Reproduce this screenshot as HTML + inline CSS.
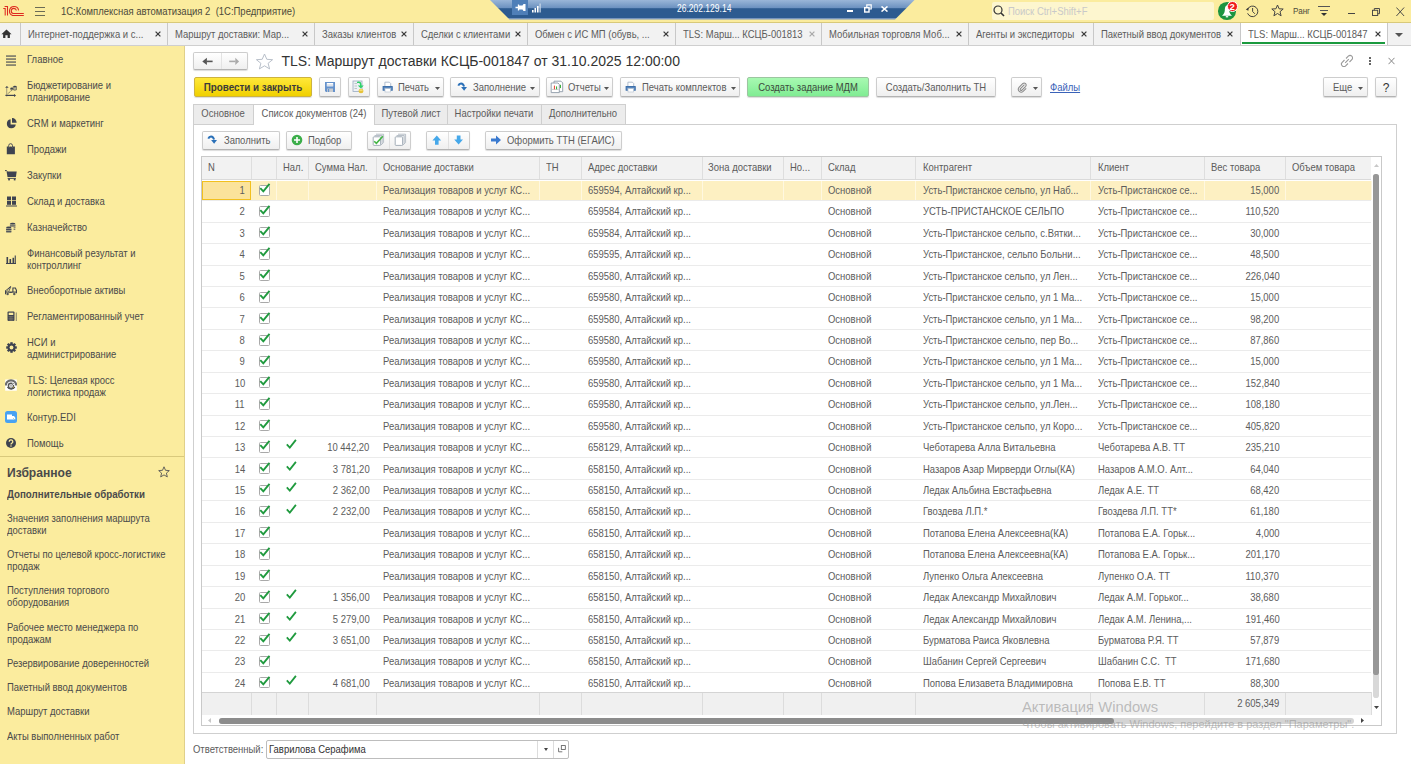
<!DOCTYPE html><html><head><meta charset="utf-8"><style>
*{box-sizing:border-box;margin:0;padding:0}
html,body{width:1411px;height:764px;overflow:hidden;background:#fff;font-family:"Liberation Sans",sans-serif;font-size:10.8px;color:#4d4d4d;position:relative}
.abs{position:absolute}
.tx{position:absolute;white-space:nowrap}
.btn{position:absolute;height:19px;border:1px solid #cdcdcd;border-bottom-color:#b3b3b3;border-radius:2px;background:linear-gradient(#fff,#efefef);box-shadow:0 1px 1px rgba(0,0,0,.14)}

</style></head><body>
<div class="abs" style="left:0;top:0;width:1411px;height:23px;background:#fbec9e"></div>
<svg class="abs" style="left:0;top:0" width="30" height="22" viewBox="0 0 30 22">
<g fill="none" stroke="#de2a20" stroke-width="1.05">
<path d="M3.3 8.5 H5.2 V15.6"/>
<path d="M4.6 6.5 H7.5 V15.6"/>
<path d="M18.6 10.3 A4.6 4.6 0 1 0 12.6 15.5 H23.8"/>
<path d="M16.4 10.5 A2.6 2.6 0 1 0 13.3 13.5 H23.8"/>
</g></svg>
<div class="abs" style="left:35px;top:7px;width:10px;height:1px;background:#6b6b55"></div>
<div class="abs" style="left:35px;top:11px;width:10px;height:1px;background:#6b6b55"></div>
<div class="abs" style="left:35px;top:15px;width:10px;height:1px;background:#6b6b55"></div>
<div class="tx" style="top:7px;font-size:10.2px;line-height:10.2px;color:#4d4a3a;left:61px;transform-origin:0 0;transform:scaleX(0.93);">1С:Комплексная автоматизация 2&nbsp; (1С:Предприятие)</div>
<svg class="abs" style="left:490px;top:0" width="425" height="20" viewBox="0 0 425 20">
<defs><linearGradient id="rg" x1="0" y1="0" x2="0" y2="1">
<stop offset="0" stop-color="#9ab6d8"/><stop offset="0.42" stop-color="#6a90bf"/><stop offset="0.44" stop-color="#2d5b90"/><stop offset="0.92" stop-color="#2d5b90"/><stop offset="0.93" stop-color="#7795bd"/><stop offset="1" stop-color="#7795bd"/></linearGradient></defs>
<path d="M0 0 H424.5 L405 19.5 H19.5 Z" fill="url(#rg)"/>
</svg>
<div class="abs" style="left:512px;top:0;width:16px;height:15px;background:#4f7fb8"></div>
<svg class="abs" style="left:515px;top:3px" width="11" height="9" viewBox="0 0 11 9"><path d="M0.5 4.5 H4 M3.5 1.5 V7.5" stroke="#fff" stroke-width="1.3"/><path d="M4 2.5 H7.5 L8.5 1 H10.5 V8 H8.5 L7.5 6.5 H4Z" fill="#fff"/></svg>
<svg class="abs" style="left:532px;top:3px" width="10" height="10" viewBox="0 0 10 10"><rect x="0" y="7" width="1.6" height="2.5" fill="#fff"/><rect x="2.5" y="5" width="1.6" height="4.5" fill="#fff"/><rect x="5" y="3" width="1.6" height="6.5" fill="#fff"/><rect x="7.5" y="0.5" width="1.2" height="9" fill="#cfdcec"/></svg>
<div class="tx" style="top:4px;font-size:10px;line-height:10px;color:#fff;left:677px;transform-origin:0 0;transform:scaleX(0.85);">26.202.129.14</div>
<div class="abs" style="left:847px;top:10px;width:6px;height:2px;background:#fff"></div>
<svg class="abs" style="left:864px;top:4px" width="8" height="9" viewBox="0 0 8 9"><rect x="0.7" y="3.7" width="4.3" height="4.3" fill="none" stroke="#fff" stroke-width="1.4"/><path d="M2.8 3.5 V0.8 H7.2 V5 H5" fill="none" stroke="#fff" stroke-width="1.2"/></svg>
<svg class="abs" style="left:881px;top:6px" width="7" height="6" viewBox="0 0 7 6"><path d="M0.5 0.5 L6.5 5.5 M6.5 0.5 L0.5 5.5" stroke="#fff" stroke-width="1.6"/></svg>
<div class="abs" style="left:992px;top:2px;width:222px;height:18px;background:#fdf6cf;border-radius:2px"></div>
<svg class="abs" style="left:993px;top:5px" width="12" height="12" viewBox="0 0 12 12"><circle cx="5" cy="5" r="4" fill="none" stroke="#333" stroke-width="1.2"/><path d="M8 8 L11 11" stroke="#333" stroke-width="1.6"/></svg>
<div class="tx" style="top:7px;font-size:10.2px;line-height:10.2px;color:#c9c9c9;left:1008px;transform-origin:0 0;transform:scaleX(0.93);">Поиск Ctrl+Shift+F</div>
<div class="abs" style="left:1218.3px;top:2.2px;width:17.7px;height:17.7px;border-radius:50%;background:#1b9440"></div>
<svg class="abs" style="left:1221px;top:4px" width="12" height="14" viewBox="0 0 12 14"><path d="M6 1.5 C4.2 1.5 4 4 3.8 6.5 C3.6 9 2.5 10.5 1 11.8 H11 C9.5 10.5 8.4 9 8.2 6.5 C8 4 7.8 1.5 6 1.5Z" fill="#fff"/><rect x="4.8" y="12" width="2.4" height="1.4" fill="#e8f0e8"/></svg>
<div class="abs" style="left:1226.6px;top:0.6px;width:11.2px;height:11.2px;border-radius:50%;background:#f01a1a;border:0.8px solid #fff"></div>
<div class="tx" style="top:2px;font-size:9.5px;line-height:9.5px;color:#fff;font-weight:bold;left:932.2px;width:600px;text-align:center;transform-origin:50% 0;">2</div>
<svg class="abs" style="left:1245px;top:4px" width="14" height="14" viewBox="0 0 14 14"><path d="M2.8 5 A5.3 5.3 0 1 1 2.6 9.3" fill="none" stroke="#3a3a3a" stroke-width="0.95"/><path d="M0.8 5.6 L3.6 3.6 L3.4 6.8Z" fill="#3a3a3a"/><path d="M7.6 4 V7.5 L9.9 9.8" fill="none" stroke="#3a3a3a" stroke-width="0.95"/></svg>
<svg class="abs" style="left:1271px;top:4px" width="13" height="13" viewBox="0 0 13 13"><path d="M6.5 1 L8.1 4.8 L12.2 5 L9 7.7 L10.1 11.8 L6.5 9.5 L2.9 11.8 L4 7.7 L0.8 5 L4.9 4.8Z" fill="none" stroke="#444" stroke-width="1"/></svg>
<div class="tx" style="top:7px;font-size:9px;line-height:9px;color:#4d4a3a;left:1293px;transform-origin:0 0;transform:scaleX(0.9);">Ранг</div>
<div class="abs" style="left:1318px;top:6px;width:12px;height:1.2px;background:#555"></div>
<div class="abs" style="left:1320px;top:10px;width:8px;height:1.2px;background:#555"></div>
<svg class="abs" style="left:1321px;top:13px" width="6" height="4" viewBox="0 0 6 4"><path d="M0 0H6L3 3Z" fill="#333"/></svg>
<div class="abs" style="left:1348px;top:13px;width:7px;height:1.2px;background:#444"></div>
<svg class="abs" style="left:1371.5px;top:7.5px" width="8" height="8" viewBox="0 0 8 8"><rect x="0.5" y="2.3" width="5.2" height="5.2" fill="none" stroke="#444" stroke-width="0.95"/><path d="M2.3 2.3V0.5H7.5V5.7H5.7" fill="none" stroke="#444" stroke-width="0.95"/></svg>
<svg class="abs" style="left:1396px;top:6.5px" width="8.5" height="9.5" viewBox="0 0 8.5 9.5"><path d="M0.4 0.5 L8.1 9 M8.1 0.5 L0.4 9" stroke="#444" stroke-width="0.95"/></svg>
<div class="abs" style="left:0;top:22px;width:1411px;height:1px;background:#d8c97a"></div>
<div class="abs" style="left:0;top:23px;width:1411px;height:22.5px;background:#f2f2f2;border-bottom:1px solid #cfcfcf"></div>
<svg class="abs" style="left:1px;top:28.5px" width="11" height="9.5" viewBox="0 0 13 11"><path d="M6.5 0.5 L12.5 6 H10.5 V10.5 H7.8 V7.3 H5.2 V10.5 H2.5 V6 H0.5Z" fill="#333"/></svg>
<div class="abs" style="left:20px;top:23px;width:1px;height:22px;background:#c8c8c8"></div>
<div class="tx" style="top:30px;font-size:10.2px;line-height:10.2px;color:#5c5c5c;left:28px;transform-origin:0 0;transform:scaleX(0.93);">Интернет-поддержка и с...</div>
<svg class="abs" style="left:155.2px;top:31px" width="6" height="6" viewBox="0 0 6 6"><path d="M0.6 0.6 L5.4 5.4 M5.4 0.6 L0.6 5.4" stroke="#3a3a3a" stroke-width="1.25"/></svg>
<div class="abs" style="left:167px;top:23px;width:1px;height:22px;background:#c8c8c8"></div>
<div class="tx" style="top:30px;font-size:10.2px;line-height:10.2px;color:#5c5c5c;left:175px;transform-origin:0 0;transform:scaleX(0.93);">Маршрут доставки: Мар...</div>
<svg class="abs" style="left:302.2px;top:31px" width="6" height="6" viewBox="0 0 6 6"><path d="M0.6 0.6 L5.4 5.4 M5.4 0.6 L0.6 5.4" stroke="#3a3a3a" stroke-width="1.25"/></svg>
<div class="abs" style="left:314px;top:23px;width:1px;height:22px;background:#c8c8c8"></div>
<div class="tx" style="top:30px;font-size:10.2px;line-height:10.2px;color:#5c5c5c;left:322px;transform-origin:0 0;transform:scaleX(0.93);">Заказы клиентов</div>
<svg class="abs" style="left:401.2px;top:31px" width="6" height="6" viewBox="0 0 6 6"><path d="M0.6 0.6 L5.4 5.4 M5.4 0.6 L0.6 5.4" stroke="#3a3a3a" stroke-width="1.25"/></svg>
<div class="abs" style="left:413px;top:23px;width:1px;height:22px;background:#c8c8c8"></div>
<div class="tx" style="top:30px;font-size:10.2px;line-height:10.2px;color:#5c5c5c;left:421px;transform-origin:0 0;transform:scaleX(0.93);">Сделки с клиентами</div>
<svg class="abs" style="left:515.2px;top:31px" width="6" height="6" viewBox="0 0 6 6"><path d="M0.6 0.6 L5.4 5.4 M5.4 0.6 L0.6 5.4" stroke="#3a3a3a" stroke-width="1.25"/></svg>
<div class="abs" style="left:527px;top:23px;width:1px;height:22px;background:#c8c8c8"></div>
<div class="tx" style="top:30px;font-size:10.2px;line-height:10.2px;color:#5c5c5c;left:535px;transform-origin:0 0;transform:scaleX(0.93);">Обмен с ИС МП (обувь, ...</div>
<svg class="abs" style="left:663.2px;top:31px" width="6" height="6" viewBox="0 0 6 6"><path d="M0.6 0.6 L5.4 5.4 M5.4 0.6 L0.6 5.4" stroke="#3a3a3a" stroke-width="1.25"/></svg>
<div class="abs" style="left:675px;top:23px;width:1px;height:22px;background:#c8c8c8"></div>
<div class="tx" style="top:30px;font-size:10.2px;line-height:10.2px;color:#5c5c5c;left:683px;transform-origin:0 0;transform:scaleX(0.93);">TLS: Марш... КСЦБ-001813</div>
<svg class="abs" style="left:809.2px;top:31px" width="6" height="6" viewBox="0 0 6 6"><path d="M0.6 0.6 L5.4 5.4 M5.4 0.6 L0.6 5.4" stroke="#aaa" stroke-width="1.25"/></svg>
<div class="abs" style="left:821px;top:23px;width:1px;height:22px;background:#c8c8c8"></div>
<div class="tx" style="top:30px;font-size:10.2px;line-height:10.2px;color:#5c5c5c;left:829px;transform-origin:0 0;transform:scaleX(0.93);">Мобильная торговля Моб...</div>
<svg class="abs" style="left:956.2px;top:31px" width="6" height="6" viewBox="0 0 6 6"><path d="M0.6 0.6 L5.4 5.4 M5.4 0.6 L0.6 5.4" stroke="#3a3a3a" stroke-width="1.25"/></svg>
<div class="abs" style="left:968px;top:23px;width:1px;height:22px;background:#c8c8c8"></div>
<div class="tx" style="top:30px;font-size:10.2px;line-height:10.2px;color:#5c5c5c;left:976px;transform-origin:0 0;transform:scaleX(0.93);">Агенты и экспедиторы</div>
<svg class="abs" style="left:1081.2px;top:31px" width="6" height="6" viewBox="0 0 6 6"><path d="M0.6 0.6 L5.4 5.4 M5.4 0.6 L0.6 5.4" stroke="#3a3a3a" stroke-width="1.25"/></svg>
<div class="abs" style="left:1093px;top:23px;width:1px;height:22px;background:#c8c8c8"></div>
<div class="tx" style="top:30px;font-size:10.2px;line-height:10.2px;color:#5c5c5c;left:1101px;transform-origin:0 0;transform:scaleX(0.93);">Пакетный ввод документов</div>
<svg class="abs" style="left:1227.2px;top:31px" width="6" height="6" viewBox="0 0 6 6"><path d="M0.6 0.6 L5.4 5.4 M5.4 0.6 L0.6 5.4" stroke="#3a3a3a" stroke-width="1.25"/></svg>
<div class="abs" style="left:1240px;top:23px;width:147px;height:22px;background:#fff"></div>
<div class="abs" style="left:1240px;top:23px;width:1px;height:22px;background:#c8c8c8"></div>
<div class="tx" style="top:30px;font-size:10.2px;line-height:10.2px;color:#5c5c5c;left:1248px;transform-origin:0 0;transform:scaleX(0.93);">TLS: Марш... КСЦБ-001847</div>
<svg class="abs" style="left:1375.2px;top:31px" width="6" height="6" viewBox="0 0 6 6"><path d="M0.6 0.6 L5.4 5.4 M5.4 0.6 L0.6 5.4" stroke="#3a3a3a" stroke-width="1.25"/></svg>
<div class="abs" style="left:1242px;top:42px;width:143px;height:1.5px;background:#1b9a3e"></div>
<div class="abs" style="left:1387px;top:23px;width:1px;height:22px;background:#c8c8c8"></div>
<svg class="abs" style="left:1395px;top:32.5px" width="8" height="4" viewBox="0 0 8 4"><path d="M0 0H8L4 4Z" fill="#555"/></svg>
<div class="abs" style="left:0;top:46px;width:185px;height:718px;background:#fbec9e;border-right:1px solid #e0d08a"></div>
<div class="tx" style="top:55px;font-size:10.2px;line-height:10.2px;color:#4a4a4a;left:27px;transform-origin:0 0;transform:scaleX(0.93);">Главное</div>
<div class="tx" style="top:81px;font-size:10.2px;line-height:10.2px;color:#4a4a4a;left:27px;transform-origin:0 0;transform:scaleX(0.93);">Бюджетирование и</div>
<div class="tx" style="top:93px;font-size:10.2px;line-height:10.2px;color:#4a4a4a;left:27px;transform-origin:0 0;transform:scaleX(0.93);">планирование</div>
<div class="tx" style="top:119px;font-size:10.2px;line-height:10.2px;color:#4a4a4a;left:27px;transform-origin:0 0;transform:scaleX(0.93);">CRM и маркетинг</div>
<div class="tx" style="top:145px;font-size:10.2px;line-height:10.2px;color:#4a4a4a;left:27px;transform-origin:0 0;transform:scaleX(0.93);">Продажи</div>
<div class="tx" style="top:171px;font-size:10.2px;line-height:10.2px;color:#4a4a4a;left:27px;transform-origin:0 0;transform:scaleX(0.93);">Закупки</div>
<div class="tx" style="top:197px;font-size:10.2px;line-height:10.2px;color:#4a4a4a;left:27px;transform-origin:0 0;transform:scaleX(0.93);">Склад и доставка</div>
<div class="tx" style="top:223px;font-size:10.2px;line-height:10.2px;color:#4a4a4a;left:27px;transform-origin:0 0;transform:scaleX(0.93);">Казначейство</div>
<div class="tx" style="top:249px;font-size:10.2px;line-height:10.2px;color:#4a4a4a;left:27px;transform-origin:0 0;transform:scaleX(0.93);">Финансовый результат и</div>
<div class="tx" style="top:261px;font-size:10.2px;line-height:10.2px;color:#4a4a4a;left:27px;transform-origin:0 0;transform:scaleX(0.93);">контроллинг</div>
<div class="tx" style="top:286px;font-size:10.2px;line-height:10.2px;color:#4a4a4a;left:27px;transform-origin:0 0;transform:scaleX(0.93);">Внеоборотные активы</div>
<div class="tx" style="top:312px;font-size:10.2px;line-height:10.2px;color:#4a4a4a;left:27px;transform-origin:0 0;transform:scaleX(0.93);">Регламентированный учет</div>
<div class="tx" style="top:338px;font-size:10.2px;line-height:10.2px;color:#4a4a4a;left:27px;transform-origin:0 0;transform:scaleX(0.93);">НСИ и</div>
<div class="tx" style="top:350px;font-size:10.2px;line-height:10.2px;color:#4a4a4a;left:27px;transform-origin:0 0;transform:scaleX(0.93);">администрирование</div>
<div class="tx" style="top:376px;font-size:10.2px;line-height:10.2px;color:#4a4a4a;left:27px;transform-origin:0 0;transform:scaleX(0.93);">TLS: Целевая кросс</div>
<div class="tx" style="top:388px;font-size:10.2px;line-height:10.2px;color:#4a4a4a;left:27px;transform-origin:0 0;transform:scaleX(0.93);">логистика продаж</div>
<div class="tx" style="top:413px;font-size:10.2px;line-height:10.2px;color:#4a4a4a;left:27px;transform-origin:0 0;transform:scaleX(0.93);">Контур.EDI</div>
<div class="tx" style="top:439px;font-size:10.2px;line-height:10.2px;color:#4a4a4a;left:27px;transform-origin:0 0;transform:scaleX(0.93);">Помощь</div>
<div class="abs" style="left:0;top:456px;width:184px;height:1px;background:#d9c97c"></div>
<div class="tx" style="top:466px;font-size:13px;line-height:13px;color:#4a4a4a;font-weight:bold;left:7px;transform-origin:0 0;transform:scaleX(0.93);">Избранное</div>
<svg class="abs" style="left:158px;top:466px" width="12" height="12" viewBox="0 0 12 12"><path d="M6 0.8 L7.5 4.3 L11.3 4.6 L8.4 7.1 L9.3 10.9 L6 8.9 L2.7 10.9 L3.6 7.1 L0.7 4.6 L4.5 4.3Z" fill="none" stroke="#555" stroke-width="0.9"/></svg>
<div class="tx" style="top:490px;font-size:10.2px;line-height:10.2px;color:#4a4a4a;font-weight:bold;left:7px;transform-origin:0 0;transform:scaleX(0.955);">Дополнительные обработки</div>
<div class="tx" style="top:514px;font-size:10.2px;line-height:10.2px;color:#4a4a4a;left:7px;transform-origin:0 0;transform:scaleX(0.93);">Значения заполнения маршрута</div>
<div class="tx" style="top:526px;font-size:10.2px;line-height:10.2px;color:#4a4a4a;left:7px;transform-origin:0 0;transform:scaleX(0.93);">доставки</div>
<div class="tx" style="top:550px;font-size:10.2px;line-height:10.2px;color:#4a4a4a;left:7px;transform-origin:0 0;transform:scaleX(0.93);">Отчеты по целевой кросс-логистике</div>
<div class="tx" style="top:562px;font-size:10.2px;line-height:10.2px;color:#4a4a4a;left:7px;transform-origin:0 0;transform:scaleX(0.93);">продаж</div>
<div class="tx" style="top:586px;font-size:10.2px;line-height:10.2px;color:#4a4a4a;left:7px;transform-origin:0 0;transform:scaleX(0.93);">Поступления торгового</div>
<div class="tx" style="top:598px;font-size:10.2px;line-height:10.2px;color:#4a4a4a;left:7px;transform-origin:0 0;transform:scaleX(0.93);">оборудования</div>
<div class="tx" style="top:623px;font-size:10.2px;line-height:10.2px;color:#4a4a4a;left:7px;transform-origin:0 0;transform:scaleX(0.93);">Рабочее место менеджера по</div>
<div class="tx" style="top:635px;font-size:10.2px;line-height:10.2px;color:#4a4a4a;left:7px;transform-origin:0 0;transform:scaleX(0.93);">продажам</div>
<div class="tx" style="top:659px;font-size:10.2px;line-height:10.2px;color:#4a4a4a;left:7px;transform-origin:0 0;transform:scaleX(0.93);">Резервирование доверенностей</div>
<div class="tx" style="top:683px;font-size:10.2px;line-height:10.2px;color:#4a4a4a;left:7px;transform-origin:0 0;transform:scaleX(0.93);">Пакетный ввод документов</div>
<div class="tx" style="top:707px;font-size:10.2px;line-height:10.2px;color:#4a4a4a;left:7px;transform-origin:0 0;transform:scaleX(0.93);">Маршрут доставки</div>
<div class="tx" style="top:732px;font-size:10.2px;line-height:10.2px;color:#4a4a4a;left:7px;transform-origin:0 0;transform:scaleX(0.93);">Акты выполненных работ</div>
<svg class="abs" style="left:6px;top:54.5px" width="10" height="11" viewBox="0 0 10 11"><rect x="0" y="0.5" width="10" height="1.1" fill="#3e4350"/><rect x="0" y="3.5" width="10" height="1.1" fill="#3e4350"/><rect x="0" y="6.5" width="10" height="1.1" fill="#3e4350"/><rect x="0" y="9.5" width="10" height="1.1" fill="#3e4350"/></svg>
<svg class="abs" style="left:5px;top:85px" width="12" height="13" viewBox="0 0 12 13"><path d="M1.65 2.2 V11.6" stroke="#b5ad80" stroke-width="1.3"/><path d="M0.1 2.8 L1.9 0.9 L3.7 2.8Z" fill="#3e4350"/><path d="M0.4 10.4 H9.6" stroke="#3e4350" stroke-width="1.2"/><path d="M9 8.9 L11.1 10.4 L9 11.9Z" fill="#3e4350"/><path d="M2.7 8.8 L7.2 5" stroke="#5d5c48" stroke-width="0.9" stroke-dasharray="1.3 0.7"/><rect x="5.3" y="3.4" width="2.8" height="1.8" fill="#8c8a70"/><ellipse cx="6.7" cy="3.4" rx="1.4" ry="0.8" fill="#3e4350"/><path d="M8.1 1.7 V4.6 Q9.9 5.9 11.7 4.6 V1.7" fill="#b8b38c" stroke="#55544a" stroke-width="0.7"/><ellipse cx="9.9" cy="1.6" rx="1.8" ry="0.8" fill="#3e4350"/></svg>
<svg class="abs" style="left:6px;top:118px" width="11" height="11" viewBox="0 0 11 11"><path d="M4.6 1.2 A4.5 4.5 0 1 0 9.8 6.4 H4.6Z" fill="#3e4350"/><path d="M6 0 A4.5 4.5 0 0 1 10.6 4.8 H6Z" fill="#3e4350"/></svg>
<svg class="abs" style="left:6px;top:142.5px" width="10" height="12" viewBox="0 0 10 12"><path d="M2.7 4.2 V2.6 A1.9 1.9 0 0 1 6.5 2.6 V4.2" fill="none" stroke="#3e4350" stroke-width="0.9"/><path d="M0.8 3.6 H2.3 L3 4.6 L3.7 3.6 H5.5 L6.2 4.6 L6.9 3.6 H8.9 V11.2 H0.8Z" fill="#3e4350"/></svg>
<svg class="abs" style="left:5px;top:169.5px" width="12" height="11" viewBox="0 0 12 11"><path d="M0 0.6 H1.6 L2.3 1.6" fill="none" stroke="#3e4350" stroke-width="1"/><path d="M1.6 1.5 H11.7 L10.9 7.1 H2.5Z" fill="#3e4350"/><rect x="2.6" y="7.9" width="8.3" height="0.9" fill="#3e4350"/><rect x="3.2" y="8.5" width="1.7" height="1.9" fill="#3e4350"/><rect x="8.8" y="8.5" width="1.7" height="1.9" fill="#3e4350"/></svg>
<svg class="abs" style="left:5.5px;top:195.5px" width="11" height="11" viewBox="0 0 11 11"><rect x="1" y="0.5" width="4" height="3.8" fill="#3e4350"/><rect x="6" y="0.5" width="4" height="3.8" fill="#3e4350"/><rect x="1" y="5" width="4" height="3.8" fill="#3e4350"/><rect x="6" y="5" width="4" height="3.8" fill="#3e4350"/><rect x="0" y="9.5" width="11" height="1" fill="#3e4350"/></svg>
<svg class="abs" style="left:6px;top:221.5px" width="11" height="11" viewBox="0 0 11 11"><rect x="3.9" y="1.6" width="5.5" height="3" fill="#a29f80"/><ellipse cx="6.65" cy="1.5" rx="2.6" ry="0.75" fill="#3e4350"/><rect x="3.9" y="2.9" width="5.5" height="0.7" fill="#3e4350" opacity=".6"/><rect x="3.9" y="4.1" width="5.5" height="0.6" fill="#3e4350" opacity=".6"/><rect x="7.6" y="5.2" width="1.9" height="0.8" fill="#3e4350" opacity=".7"/><rect x="7.6" y="6.6" width="1.7" height="1.2" fill="#3e4350" opacity=".8"/><rect x="0.1" y="5.4" width="5.3" height="5" rx="0.6" fill="#a29f80"/><ellipse cx="2.75" cy="5.4" rx="2.65" ry="0.8" fill="#3e4350"/><rect x="0.1" y="7.1" width="5.3" height="0.9" fill="#3e4350"/><rect x="0.1" y="9.2" width="5.3" height="1.1" rx="0.4" fill="#3e4350"/></svg>
<svg class="abs" style="left:6px;top:254.5px" width="10" height="9" viewBox="0 0 10 9"><rect x="0.5" y="2" width="1.6" height="6" fill="#3e4350"/><rect x="3.5" y="4" width="1.6" height="4" fill="#3e4350"/><rect x="6.5" y="2.8" width="1.6" height="5.2" fill="#3e4350"/><rect x="8.7" y="0.5" width="1.1" height="7.5" fill="#3e4350"/><rect x="0" y="8" width="10" height="1" fill="#3e4350"/></svg>
<svg class="abs" style="left:5px;top:285.5px" width="12" height="10" viewBox="0 0 12 10"><path d="M0.6 5.2 L5.9 0.4" stroke="#3e4350" stroke-width="1.4" stroke-dasharray="1.1 0.5"/><path d="M0.5 4.5 V8.3" stroke="#3e4350" stroke-width="1"/><path d="M5.6 1.2 L3.6 5.8" stroke="#3e4350" stroke-width="0.8"/><path d="M7.9 6 V2 H10.4 L11.5 4.5 V7.2" fill="none" stroke="#3e4350" stroke-width="1.1"/><path d="M0.8 6.1 H11.5" stroke="#3e4350" stroke-width="1.1"/><path d="M4 6 Q5.8 7.8 7.6 6Z" fill="#3e4350"/><circle cx="2.6" cy="8" r="1.35" fill="#7d7b66"/><circle cx="2.6" cy="8" r="0.7" fill="#3e4350"/><circle cx="9.3" cy="8" r="1.35" fill="#7d7b66"/><circle cx="9.3" cy="8" r="0.7" fill="#3e4350"/></svg>
<svg class="abs" style="left:6.5px;top:311px" width="10" height="10" viewBox="0 0 10 10"><rect x="0.5" y="0.5" width="7" height="9.5" rx="1" fill="#3e4350"/><rect x="1.7" y="1.7" width="4.6" height="2.3" fill="#fbec9e"/><path d="M1.5 5.6 H6.5 M1.5 7.3 H6.5 M1.5 9 H6.5 M3.2 5 V10 M4.9 5 V10" stroke="#8c8770" stroke-width="0.5"/><rect x="8.8" y="1.5" width="0.9" height="8.5" fill="#7a7866"/></svg>
<svg class="abs" style="left:5.5px;top:342px" width="11" height="11" viewBox="0 0 11 11"><g transform="translate(5.5 5.5)"><circle r="3.9" fill="#3e4350"/><rect x="-1.2" y="-5.3" width="2.4" height="2.6" fill="#3e4350" transform="rotate(0)"/><rect x="-1.2" y="-5.3" width="2.4" height="2.6" fill="#3e4350" transform="rotate(45)"/><rect x="-1.2" y="-5.3" width="2.4" height="2.6" fill="#3e4350" transform="rotate(90)"/><rect x="-1.2" y="-5.3" width="2.4" height="2.6" fill="#3e4350" transform="rotate(135)"/><rect x="-1.2" y="-5.3" width="2.4" height="2.6" fill="#3e4350" transform="rotate(180)"/><rect x="-1.2" y="-5.3" width="2.4" height="2.6" fill="#3e4350" transform="rotate(225)"/><rect x="-1.2" y="-5.3" width="2.4" height="2.6" fill="#3e4350" transform="rotate(270)"/><rect x="-1.2" y="-5.3" width="2.4" height="2.6" fill="#3e4350" transform="rotate(315)"/><circle r="1.9" fill="#fbec9e"/></g></svg>
<svg class="abs" style="left:5px;top:379px" width="12" height="12" viewBox="0 0 12 12"><rect x="0.2" y="0.5" width="11.6" height="11.2" fill="#fff"/><path d="M0.8 6.5 A5.2 5.2 0 0 1 11.2 6.5" fill="none" stroke="#6e6e6e" stroke-width="2.2"/><path d="M2.5 8.2 A4.5 4.5 0 0 0 9.8 8.2" fill="none" stroke="#444" stroke-width="1.3"/><circle cx="6" cy="6.8" r="2.6" fill="none" stroke="#555" stroke-width="1.4"/><path d="M6 5 V8.6 M4.6 6.8 H7.4" stroke="#888" stroke-width="0.6"/><path d="M7.5 4.5 L9.5 6.5" stroke="#fff" stroke-width="0.9"/><circle cx="8.4" cy="8.2" r="0.6" fill="#b9a040"/></svg>
<svg class="abs" style="left:5px;top:411px" width="12" height="12" viewBox="0 0 12 12"><rect width="12" height="12" rx="2.5" fill="#48a2f2"/><path d="M2 3.5 H7 V8.5 H2Z M7 5 H9 L10.3 6.8 V8.5 H7Z" fill="#fff"/><path d="M8 7 L10 9" stroke="#7bb" stroke-width="0.6"/></svg>
<svg class="abs" style="left:6px;top:437.5px" width="10" height="10" viewBox="0 0 10 10"><circle cx="5" cy="5" r="5" fill="#3e4350"/><path d="M3.2 3.8 A1.8 1.8 0 1 1 5.6 5.4 Q5 5.8 5 6.6" fill="none" stroke="#fbec9e" stroke-width="1.3"/><circle cx="5" cy="8.1" r="0.75" fill="#fbec9e"/></svg>
<div class="btn" style="left:193px;top:52px;width:55px;height:18px"></div>
<div class="abs" style="left:221px;top:53px;width:1px;height:16px;background:#e3e3e3"></div>
<svg class="abs" style="left:200px;top:56px" width="14" height="11" viewBox="0 0 14 11"><path d="M2.3 5.4 L6.9 1.8 V9.1Z" fill="#555"/><rect x="6.5" y="4.6" width="6.1" height="1.6" fill="#555"/></svg>
<svg class="abs" style="left:227px;top:56px" width="14" height="11" viewBox="0 0 14 11"><path d="M12.1 5.4 L8.3 1.8 V9.1Z" fill="#aaa"/><rect x="2.2" y="4.6" width="6.3" height="1.6" fill="#aaa"/></svg>
<svg class="abs" style="left:255px;top:53px" width="19" height="17" viewBox="0 0 19 17"><path d="M9.5 1 L11.8 6.3 L17.6 6.7 L13.1 10.3 L14.6 15.9 L9.5 12.8 L4.4 15.9 L5.9 10.3 L1.4 6.7 L7.2 6.3Z" fill="none" stroke="#b4bcc6" stroke-width="0.95"/></svg>
<div class="tx" style="top:54px;font-size:14px;line-height:14px;color:#333;left:281.5px;transform-origin:0 0;">TLS: Маршрут доставки КСЦБ-001847 от 31.10.2025 12:00:00</div>
<svg class="abs" style="left:1340px;top:54px" width="14" height="14" viewBox="0 0 14 14"><g fill="none" stroke="#9a9a9a" stroke-width="1.1"><path d="M6 4.5 L8.3 2.2 A2 2 0 0 1 11.8 5.7 L9.5 8"/><path d="M8 9.5 L5.7 11.8 A2 2 0 0 1 2.2 8.3 L4.5 6"/><path d="M5.2 8.8 L8.8 5.2"/></g></svg>
<div class="abs" style="left:1368.5px;top:57px;width:2px;height:2px;background:#666"></div>
<div class="abs" style="left:1368.5px;top:60px;width:2px;height:2px;background:#666"></div>
<div class="abs" style="left:1368.5px;top:63px;width:2px;height:2px;background:#666"></div>
<svg class="abs" style="left:1388px;top:57px" width="7" height="8" viewBox="0 0 7 8"><path d="M0.5 0.8 L6.5 7.2 M6.5 0.8 L0.5 7.2" stroke="#888" stroke-width="1"/></svg>
<div class="btn" style="left:194px;top:77.3px;height:19.4px;width:118px;background:linear-gradient(#ffe83a,#f0d000);border-color:#cdb33f"></div>
<div class="tx" style="top:83px;font-size:10.2px;line-height:10.2px;color:#3b3b3b;font-weight:bold;left:-47px;width:600px;text-align:center;transform-origin:50% 0;transform:scaleX(0.965);">Провести и закрыть</div>
<div class="btn" style="left:319px;top:77.3px;height:19.4px;width:22px"></div>
<svg class="abs" style="left:325px;top:82px" width="10" height="10" viewBox="0 0 10 10"><path d="M0 0 H10 V10 H1 L0 9Z" fill="#6592cc"/><rect x="1.8" y="1" width="6.4" height="3.4" fill="#fff"/><rect x="1.8" y="2.6" width="6.4" height="0.9" fill="#b9c6d6"/><rect x="2.2" y="6.5" width="5.8" height="3.5" fill="#c9ccd0"/><rect x="3" y="7" width="1.2" height="3" fill="#6592cc"/></svg>
<div class="btn" style="left:348px;top:77.3px;height:19.4px;width:22px"></div>
<svg class="abs" style="left:352px;top:80px" width="14" height="14" viewBox="0 0 14 14"><rect x="1" y="1" width="9" height="10.5" fill="#eef1f5" stroke="#9aaac0" stroke-width="0.8"/><path d="M2.5 3.5H5M2.5 6H5M2.5 8.5H5" stroke="#9aa" stroke-width="0.6"/><path d="M5 2 C7.5 1 9.5 2 9.5 4.5 V5.5 H11.8 L8.8 8.6 L5.8 5.5 H8 V4.5 C8 3.3 6.5 2.8 5 3.2Z" fill="#2ed16a"/><ellipse cx="9" cy="11" rx="2.5" ry="2.3" fill="#e6c23a"/><ellipse cx="9" cy="10.2" rx="1.8" ry="0.9" fill="#f5dc70"/></svg>
<div class="btn" style="left:377px;top:77.3px;height:19.4px;width:67px"></div>
<svg class="abs" style="left:382px;top:81px" width="12" height="12" viewBox="0 0 12 12"><path d="M2.9 5.2 V1.2 H7.4 L8.7 2.5 V5.2" fill="#fff" stroke="#9fb0c4" stroke-width="0.8"/><rect x="0.6" y="5" width="10.2" height="4.8" rx="0.6" fill="#3f70aa"/><rect x="1.6" y="6.2" width="8.2" height="2.6" fill="#5f8cc2"/><rect x="3" y="7.6" width="5.5" height="3.4" fill="#fff" stroke="#b7c3d0" stroke-width="0.7"/></svg>
<div class="tx" style="top:83px;font-size:10.2px;line-height:10.2px;color:#5c5c5c;left:398px;transform-origin:0 0;transform:scaleX(0.93);">Печать</div>
<svg class="abs" style="left:434.5px;top:86.5px" width="5" height="3" viewBox="0 0 5 3"><path d="M0 0H5L2.5 3Z" fill="#555"/></svg>
<div class="btn" style="left:450px;top:77.3px;height:19.4px;width:89.5px"></div>
<svg class="abs" style="left:457px;top:81px" width="12" height="12" viewBox="0 0 12 12"><path d="M1.3 4.6 C2.3 1.9 5.9 1.2 7.1 5.6" fill="none" stroke="#2a70b8" stroke-width="1.9"/><path d="M4.1 6 H10 L7.1 9.8Z" fill="#2a70b8"/></svg>
<div class="tx" style="top:83px;font-size:10.2px;line-height:10.2px;color:#5c5c5c;left:473px;transform-origin:0 0;transform:scaleX(0.93);">Заполнение</div>
<svg class="abs" style="left:530.0px;top:86.5px" width="5" height="3" viewBox="0 0 5 3"><path d="M0 0H5L2.5 3Z" fill="#555"/></svg>
<div class="btn" style="left:546px;top:77.3px;height:19.4px;width:67px"></div>
<svg class="abs" style="left:550px;top:80px" width="14" height="14" viewBox="0 0 14 14"><path d="M4 1.2 H11 L12.7 2.9 V11.7 H4Z" fill="#fff" stroke="#8d9aa8" stroke-width="0.9"/><path d="M1.2 3 H8 L9.3 4.3 V12.6 H1.2Z" fill="#fff" stroke="#8d9aa8" stroke-width="0.9"/><path d="M2 9.4 H8.5" stroke="#aaa" stroke-width="0.6"/><rect x="3.9" y="5.6" width="1.1" height="3.7" fill="#e8503c"/><rect x="6" y="6.4" width="1.1" height="2.9" fill="#3fae3f"/><rect x="9.9" y="4.8" width="1.1" height="3.3" fill="#3fae3f"/></svg>
<div class="tx" style="top:83px;font-size:10.2px;line-height:10.2px;color:#5c5c5c;left:568px;transform-origin:0 0;transform:scaleX(0.93);">Отчеты</div>
<svg class="abs" style="left:603.5px;top:86.5px" width="5" height="3" viewBox="0 0 5 3"><path d="M0 0H5L2.5 3Z" fill="#555"/></svg>
<div class="btn" style="left:620px;top:77.3px;height:19.4px;width:120px"></div>
<svg class="abs" style="left:625px;top:81px" width="12" height="12" viewBox="0 0 12 12"><path d="M2.9 5.2 V1.2 H7.4 L8.7 2.5 V5.2" fill="#fff" stroke="#9fb0c4" stroke-width="0.8"/><rect x="0.6" y="5" width="10.2" height="4.8" rx="0.6" fill="#3f70aa"/><rect x="1.6" y="6.2" width="8.2" height="2.6" fill="#5f8cc2"/><rect x="3" y="7.6" width="5.5" height="3.4" fill="#fff" stroke="#b7c3d0" stroke-width="0.7"/></svg>
<div class="tx" style="top:83px;font-size:10.2px;line-height:10.2px;color:#5c5c5c;left:642px;transform-origin:0 0;transform:scaleX(0.93);">Печать комплектов</div>
<svg class="abs" style="left:730.5px;top:86.5px" width="5" height="3" viewBox="0 0 5 3"><path d="M0 0H5L2.5 3Z" fill="#555"/></svg>
<div class="btn" style="left:747px;top:77.3px;height:19.4px;width:122px;background:linear-gradient(#a8f9b2,#80ec93);border-color:#9cc6a0"></div>
<div class="tx" style="top:83px;font-size:10.2px;line-height:10.2px;color:#3d4a3d;left:508px;width:600px;text-align:center;transform-origin:50% 0;transform:scaleX(0.93);">Создать задание МДМ</div>
<div class="btn" style="left:876px;top:77.3px;height:19.4px;width:120px"></div>
<div class="tx" style="top:83px;font-size:10.2px;line-height:10.2px;color:#5c5c5c;left:636px;width:600px;text-align:center;transform-origin:50% 0;transform:scaleX(0.93);">Создать/Заполнить ТН</div>
<div class="btn" style="left:1011px;top:77.3px;height:19.4px;width:31px"></div>
<svg class="abs" style="left:1016.5px;top:82px" width="10.5" height="10.5" viewBox="0 0 12 12"><path d="M8.5 3 L4 7.5 A1.2 1.2 0 0 0 5.7 9.2 L10 4.9 A2.3 2.3 0 0 0 6.8 1.7 L2.3 6.2 A3.3 3.3 0 0 0 7 10.8 L10.5 7.3" fill="none" stroke="#8a8a8a" stroke-width="1.2"/></svg>
<svg class="abs" style="left:1032.5px;top:86.5px" width="5" height="3" viewBox="0 0 5 3"><path d="M0 0H5L2.5 3Z" fill="#555"/></svg>
<div class="tx" style="top:83px;font-size:10.2px;line-height:10.2px;color:#3a62b8;left:1050px;transform-origin:0 0;transform:scaleX(0.93);text-decoration:underline;">Файлы</div>
<div class="btn" style="left:1323px;top:77.3px;height:19.4px;width:45px"></div>
<div class="tx" style="top:83px;font-size:10.2px;line-height:10.2px;color:#5c5c5c;left:1333px;transform-origin:0 0;transform:scaleX(0.93);">Еще</div>
<svg class="abs" style="left:1357.5px;top:86.5px" width="5" height="3" viewBox="0 0 5 3"><path d="M0 0H5L2.5 3Z" fill="#555"/></svg>
<div class="btn" style="left:1375px;top:77.3px;height:19.4px;width:22px"></div>
<div class="tx" style="top:82px;font-size:12px;line-height:12px;color:#333;left:1086px;width:600px;text-align:center;transform-origin:50% 0;">?</div>
<div class="abs" style="left:193px;top:124px;width:1204px;height:610px;border:1px solid #cfcfcf;background:#fff"></div>
<div class="abs" style="left:193px;top:104px;width:61px;height:20px;background:#ececec;border:1px solid #cfcfcf;border-bottom:none"></div>
<div class="tx" style="top:109px;font-size:10.2px;line-height:10.2px;color:#5c5c5c;left:-77.0px;width:600px;text-align:center;transform-origin:50% 0;transform:scaleX(0.93);">Основное</div>
<div class="abs" style="left:253px;top:104px;width:122px;height:21px;background:#fff;border:1px solid #cfcfcf;border-bottom:none"></div>
<div class="tx" style="top:109px;font-size:10.2px;line-height:10.2px;color:#5c5c5c;left:13.5px;width:600px;text-align:center;transform-origin:50% 0;transform:scaleX(0.93);">Список документов (24)</div>
<div class="abs" style="left:374px;top:104px;width:74px;height:20px;background:#ececec;border:1px solid #cfcfcf;border-bottom:none"></div>
<div class="tx" style="top:109px;font-size:10.2px;line-height:10.2px;color:#5c5c5c;left:110.5px;width:600px;text-align:center;transform-origin:50% 0;transform:scaleX(0.93);">Путевой лист</div>
<div class="abs" style="left:447px;top:104px;width:95px;height:20px;background:#ececec;border:1px solid #cfcfcf;border-bottom:none"></div>
<div class="tx" style="top:109px;font-size:10.2px;line-height:10.2px;color:#5c5c5c;left:194.0px;width:600px;text-align:center;transform-origin:50% 0;transform:scaleX(0.93);">Настройки печати</div>
<div class="abs" style="left:541px;top:104px;width:85px;height:20px;background:#ececec;border:1px solid #cfcfcf;border-bottom:none"></div>
<div class="tx" style="top:109px;font-size:10.2px;line-height:10.2px;color:#5c5c5c;left:283.0px;width:600px;text-align:center;transform-origin:50% 0;transform:scaleX(0.93);">Дополнительно</div>
<div class="btn" style="left:202px;top:131px;width:78px"></div>
<svg class="abs" style="left:207px;top:134px" width="12" height="12" viewBox="0 0 12 12"><path d="M1.3 4.6 C2.3 1.9 5.9 1.2 7.1 5.6" fill="none" stroke="#2a70b8" stroke-width="1.9"/><path d="M4.1 6 H10 L7.1 9.8Z" fill="#2a70b8"/></svg>
<div class="tx" style="top:136px;font-size:10.2px;line-height:10.2px;color:#5c5c5c;left:224px;transform-origin:0 0;transform:scaleX(0.93);">Заполнить</div>
<div class="btn" style="left:286px;top:131px;width:66px"></div>
<svg class="abs" style="left:291px;top:134px" width="12" height="12" viewBox="0 0 12 12"><circle cx="6" cy="6" r="5.3" fill="#3cae4a"/><path d="M6 3V9M3 6H9" stroke="#fff" stroke-width="1.6"/></svg>
<div class="tx" style="top:136px;font-size:10.2px;line-height:10.2px;color:#5c5c5c;left:308px;transform-origin:0 0;transform:scaleX(0.93);">Подбор</div>
<div class="btn" style="left:367px;top:131px;width:44px"></div>
<div class="abs" style="left:389px;top:132px;width:1px;height:17px;background:#e0e0e0"></div>
<svg class="abs" style="left:372px;top:133px" width="13" height="14" viewBox="0 0 13 14"><path d="M4 1.2 H11.6 V9.5 L10 11" fill="#f4f6f8" stroke="#a9b3bd" stroke-width="0.8"/><path d="M2.6 2.5 H10.2 V10.8 L8.6 12.4" fill="#eef1f4" stroke="#a9b3bd" stroke-width="0.8"/><rect x="1.2" y="3.8" width="7.4" height="8.6" rx="0.8" fill="#fff" stroke="#9aa5b0" stroke-width="0.9"/><path d="M2.2 8.2 L4.4 10.4 L10.8 3.2" fill="none" stroke="#45b545" stroke-width="1.6"/></svg>
<svg class="abs" style="left:393.5px;top:133px" width="13" height="14" viewBox="0 0 13 14"><path d="M4 1.2 H11.6 V9.5 L10 11" fill="#f4f6f8" stroke="#a9b3bd" stroke-width="0.8"/><path d="M2.6 2.5 H10.2 V10.8 L8.6 12.4" fill="#eef1f4" stroke="#a9b3bd" stroke-width="0.8"/><rect x="1.2" y="3.8" width="7.4" height="8.6" rx="0.8" fill="#fff" stroke="#9aa5b0" stroke-width="0.9"/></svg>
<div class="btn" style="left:426px;top:131px;width:44px"></div>
<div class="abs" style="left:448px;top:132px;width:1px;height:17px;background:#e0e0e0"></div>
<svg class="abs" style="left:432px;top:135px" width="10" height="10" viewBox="0 0 10 10"><path d="M4.8 0.6 L9.2 5.6 H6.6 V9.8 H3 V5.6 H0.4Z" fill="#45a8ea"/></svg>
<svg class="abs" style="left:453.5px;top:135px" width="10" height="10" viewBox="0 0 10 10"><path d="M4.6 9.6 L9 4.6 H6.5 V0.6 H2.8 V4.6 H0.2Z" fill="#45a8ea"/></svg>
<div class="btn" style="left:485px;top:131px;width:137px"></div>
<svg class="abs" style="left:490px;top:134px" width="12" height="12" viewBox="0 0 12 12"><path d="M1 4.5 H6 V1.5 L11 6 L6 10.5 V7.5 H1Z" fill="#3a7ad0"/></svg>
<div class="tx" style="top:136px;font-size:10.2px;line-height:10.2px;color:#5c5c5c;left:507px;transform-origin:0 0;transform:scaleX(0.93);">Оформить ТТН (ЕГАИС)</div>
<div class="abs" style="left:201px;top:156px;width:1181px;height:570px;border:1px solid #c9c9c9;background:#fff"></div>
<div class="abs" style="left:202px;top:157px;width:1169px;height:22.5px;background:#f2f2f2"></div>
<div class="abs" style="left:202px;top:179px;width:1169px;height:1px;background:#dadada"></div>
<div class="abs" style="left:250.8px;top:157px;width:1px;height:22px;background:#dedede"></div>
<div class="tx" style="top:163px;font-size:10.2px;line-height:10.2px;color:#5c5c5c;left:207.5px;transform-origin:0 0;transform:scaleX(0.93);">N</div>
<div class="abs" style="left:275.8px;top:157px;width:1px;height:22px;background:#dedede"></div>
<div class="abs" style="left:308.3px;top:157px;width:1px;height:22px;background:#dedede"></div>
<div class="tx" style="top:163px;font-size:10.2px;line-height:10.2px;color:#5c5c5c;left:282.6px;transform-origin:0 0;transform:scaleX(0.93);">Нал.</div>
<div class="abs" style="left:376.2px;top:157px;width:1px;height:22px;background:#dedede"></div>
<div class="tx" style="top:163px;font-size:10.2px;line-height:10.2px;color:#5c5c5c;left:315.1px;transform-origin:0 0;transform:scaleX(0.93);">Сумма Нал.</div>
<div class="abs" style="left:539.0px;top:157px;width:1px;height:22px;background:#dedede"></div>
<div class="tx" style="top:163px;font-size:10.2px;line-height:10.2px;color:#5c5c5c;left:383.0px;transform-origin:0 0;transform:scaleX(0.93);">Основание доставки</div>
<div class="abs" style="left:580.9px;top:157px;width:1px;height:22px;background:#dedede"></div>
<div class="tx" style="top:163px;font-size:10.2px;line-height:10.2px;color:#5c5c5c;left:545.8px;transform-origin:0 0;transform:scaleX(0.93);">ТН</div>
<div class="abs" style="left:701.5px;top:157px;width:1px;height:22px;background:#dedede"></div>
<div class="tx" style="top:163px;font-size:10.2px;line-height:10.2px;color:#5c5c5c;left:587.6999999999999px;transform-origin:0 0;transform:scaleX(0.93);">Адрес доставки</div>
<div class="abs" style="left:783.1px;top:157px;width:1px;height:22px;background:#dedede"></div>
<div class="tx" style="top:163px;font-size:10.2px;line-height:10.2px;color:#5c5c5c;left:708.3px;transform-origin:0 0;transform:scaleX(0.93);">Зона доставки</div>
<div class="abs" style="left:821.1px;top:157px;width:1px;height:22px;background:#dedede"></div>
<div class="tx" style="top:163px;font-size:10.2px;line-height:10.2px;color:#5c5c5c;left:789.9px;transform-origin:0 0;transform:scaleX(0.93);">Но...</div>
<div class="abs" style="left:914.8px;top:157px;width:1px;height:22px;background:#dedede"></div>
<div class="tx" style="top:163px;font-size:10.2px;line-height:10.2px;color:#5c5c5c;left:827.9px;transform-origin:0 0;transform:scaleX(0.93);">Склад</div>
<div class="abs" style="left:1089.8px;top:157px;width:1px;height:22px;background:#dedede"></div>
<div class="tx" style="top:163px;font-size:10.2px;line-height:10.2px;color:#5c5c5c;left:922.5999999999999px;transform-origin:0 0;transform:scaleX(0.93);">Контрагент</div>
<div class="abs" style="left:1203.8px;top:157px;width:1px;height:22px;background:#dedede"></div>
<div class="tx" style="top:163px;font-size:10.2px;line-height:10.2px;color:#5c5c5c;left:1097.6px;transform-origin:0 0;transform:scaleX(0.93);">Клиент</div>
<div class="abs" style="left:1284.9px;top:157px;width:1px;height:22px;background:#dedede"></div>
<div class="tx" style="top:163px;font-size:10.2px;line-height:10.2px;color:#5c5c5c;left:1210.6px;transform-origin:0 0;transform:scaleX(0.93);">Вес товара</div>
<div class="tx" style="top:163px;font-size:10.2px;line-height:10.2px;color:#5c5c5c;left:1291.7px;transform-origin:0 0;transform:scaleX(0.93);">Объем товара</div>
<div class="abs" style="left:251.3px;top:180.7px;width:1119.7px;height:19.23px;background:#fdf0c2"></div>
<div class="abs" style="left:275.8px;top:180.7px;width:1px;height:19.23px;background:#fff8e0"></div>
<div class="abs" style="left:308.3px;top:180.7px;width:1px;height:19.23px;background:#fff8e0"></div>
<div class="abs" style="left:376.2px;top:180.7px;width:1px;height:19.23px;background:#fff8e0"></div>
<div class="abs" style="left:539.0px;top:180.7px;width:1px;height:19.23px;background:#fff8e0"></div>
<div class="abs" style="left:580.9px;top:180.7px;width:1px;height:19.23px;background:#fff8e0"></div>
<div class="abs" style="left:701.5px;top:180.7px;width:1px;height:19.23px;background:#fff8e0"></div>
<div class="abs" style="left:783.1px;top:180.7px;width:1px;height:19.23px;background:#fff8e0"></div>
<div class="abs" style="left:821.1px;top:180.7px;width:1px;height:19.23px;background:#fff8e0"></div>
<div class="abs" style="left:914.8px;top:180.7px;width:1px;height:19.23px;background:#fff8e0"></div>
<div class="abs" style="left:1089.8px;top:180.7px;width:1px;height:19.23px;background:#fff8e0"></div>
<div class="abs" style="left:1203.8px;top:180.7px;width:1px;height:19.23px;background:#fff8e0"></div>
<div class="abs" style="left:1284.9px;top:180.7px;width:1px;height:19.23px;background:#fff8e0"></div>
<div class="abs" style="left:1370.5px;top:180.7px;width:1px;height:19.23px;background:#fff8e0"></div>
<div class="abs" style="left:202px;top:181.0px;width:48.80000000000001px;height:19.43px;background:#fbe39b;border:1px solid #f2c01e"></div>
<div class="abs" style="left:202px;top:200.33px;width:1169px;height:1px;background:#ebebeb"></div>
<div class="tx" style="top:186px;font-size:10.2px;line-height:10.2px;color:#5c5c5c;right:1166px;transform-origin:100% 0;transform:scaleX(0.93);">1</div>
<div class="abs" style="left:258.5px;top:184.5px;width:11px;height:11px;border:1px solid #a9a9a9;border-radius:1.5px;background:#fff"></div>
<svg class="abs" style="left:259.2px;top:183.1px" width="12" height="10" viewBox="0 0 12 10"><path d="M1.3 5.2 L4.3 8.3 L10.5 0.8" fill="none" stroke="#1f9a3e" stroke-width="1.9"/></svg>
<div class="tx" style="top:186px;font-size:10.2px;line-height:10.2px;color:#5c5c5c;left:382.8px;transform-origin:0 0;transform:scaleX(0.93);">Реализация товаров и услуг КС...</div>
<div class="tx" style="top:186px;font-size:10.2px;line-height:10.2px;color:#5c5c5c;left:587.6999999999999px;transform-origin:0 0;transform:scaleX(0.93);">659594, Алтайский кр...</div>
<div class="tx" style="top:186px;font-size:10.2px;line-height:10.2px;color:#5c5c5c;left:827.9px;transform-origin:0 0;transform:scaleX(0.93);">Основной</div>
<div class="tx" style="top:186px;font-size:10.2px;line-height:10.2px;color:#5c5c5c;left:922.5999999999999px;transform-origin:0 0;transform:scaleX(0.93);">Усть-Пристанское сельпо, ул Наб...</div>
<div class="tx" style="top:186px;font-size:10.2px;line-height:10.2px;color:#5c5c5c;left:1097.6px;transform-origin:0 0;transform:scaleX(0.93);">Усть-Пристанское се...</div>
<div class="tx" style="top:186px;font-size:10.2px;line-height:10.2px;color:#5c5c5c;right:131.5px;transform-origin:100% 0;transform:scaleX(0.93);">15,000</div>
<div class="abs" style="left:202px;top:221.76000000000002px;width:1169px;height:1px;background:#ebebeb"></div>
<div class="tx" style="top:207px;font-size:10.2px;line-height:10.2px;color:#5c5c5c;right:1166px;transform-origin:100% 0;transform:scaleX(0.93);">2</div>
<div class="abs" style="left:258.5px;top:205.93px;width:11px;height:11px;border:1px solid #a9a9a9;border-radius:1.5px;background:#fff"></div>
<svg class="abs" style="left:259.2px;top:204.53px" width="12" height="10" viewBox="0 0 12 10"><path d="M1.3 5.2 L4.3 8.3 L10.5 0.8" fill="none" stroke="#1f9a3e" stroke-width="1.9"/></svg>
<div class="tx" style="top:207px;font-size:10.2px;line-height:10.2px;color:#5c5c5c;left:382.8px;transform-origin:0 0;transform:scaleX(0.93);">Реализация товаров и услуг КС...</div>
<div class="tx" style="top:207px;font-size:10.2px;line-height:10.2px;color:#5c5c5c;left:587.6999999999999px;transform-origin:0 0;transform:scaleX(0.93);">659584, Алтайский кр...</div>
<div class="tx" style="top:207px;font-size:10.2px;line-height:10.2px;color:#5c5c5c;left:827.9px;transform-origin:0 0;transform:scaleX(0.93);">Основной</div>
<div class="tx" style="top:207px;font-size:10.2px;line-height:10.2px;color:#5c5c5c;left:922.5999999999999px;transform-origin:0 0;transform:scaleX(0.93);">УСТЬ-ПРИСТАНСКОЕ СЕЛЬПО</div>
<div class="tx" style="top:207px;font-size:10.2px;line-height:10.2px;color:#5c5c5c;left:1097.6px;transform-origin:0 0;transform:scaleX(0.93);">Усть-Пристанское се...</div>
<div class="tx" style="top:207px;font-size:10.2px;line-height:10.2px;color:#5c5c5c;right:131.5px;transform-origin:100% 0;transform:scaleX(0.93);">110,520</div>
<div class="abs" style="left:202px;top:243.19000000000003px;width:1169px;height:1px;background:#ebebeb"></div>
<div class="tx" style="top:229px;font-size:10.2px;line-height:10.2px;color:#5c5c5c;right:1166px;transform-origin:100% 0;transform:scaleX(0.93);">3</div>
<div class="abs" style="left:258.5px;top:227.36px;width:11px;height:11px;border:1px solid #a9a9a9;border-radius:1.5px;background:#fff"></div>
<svg class="abs" style="left:259.2px;top:225.96px" width="12" height="10" viewBox="0 0 12 10"><path d="M1.3 5.2 L4.3 8.3 L10.5 0.8" fill="none" stroke="#1f9a3e" stroke-width="1.9"/></svg>
<div class="tx" style="top:229px;font-size:10.2px;line-height:10.2px;color:#5c5c5c;left:382.8px;transform-origin:0 0;transform:scaleX(0.93);">Реализация товаров и услуг КС...</div>
<div class="tx" style="top:229px;font-size:10.2px;line-height:10.2px;color:#5c5c5c;left:587.6999999999999px;transform-origin:0 0;transform:scaleX(0.93);">659584, Алтайский кр...</div>
<div class="tx" style="top:229px;font-size:10.2px;line-height:10.2px;color:#5c5c5c;left:827.9px;transform-origin:0 0;transform:scaleX(0.93);">Основной</div>
<div class="tx" style="top:229px;font-size:10.2px;line-height:10.2px;color:#5c5c5c;left:922.5999999999999px;transform-origin:0 0;transform:scaleX(0.93);">Усть-Пристанское сельпо, с.Вятки...</div>
<div class="tx" style="top:229px;font-size:10.2px;line-height:10.2px;color:#5c5c5c;left:1097.6px;transform-origin:0 0;transform:scaleX(0.93);">Усть-Пристанское се...</div>
<div class="tx" style="top:229px;font-size:10.2px;line-height:10.2px;color:#5c5c5c;right:131.5px;transform-origin:100% 0;transform:scaleX(0.93);">30,000</div>
<div class="abs" style="left:202px;top:264.61999999999995px;width:1169px;height:1px;background:#ebebeb"></div>
<div class="tx" style="top:250px;font-size:10.2px;line-height:10.2px;color:#5c5c5c;right:1166px;transform-origin:100% 0;transform:scaleX(0.93);">4</div>
<div class="abs" style="left:258.5px;top:248.79px;width:11px;height:11px;border:1px solid #a9a9a9;border-radius:1.5px;background:#fff"></div>
<svg class="abs" style="left:259.2px;top:247.39px" width="12" height="10" viewBox="0 0 12 10"><path d="M1.3 5.2 L4.3 8.3 L10.5 0.8" fill="none" stroke="#1f9a3e" stroke-width="1.9"/></svg>
<div class="tx" style="top:250px;font-size:10.2px;line-height:10.2px;color:#5c5c5c;left:382.8px;transform-origin:0 0;transform:scaleX(0.93);">Реализация товаров и услуг КС...</div>
<div class="tx" style="top:250px;font-size:10.2px;line-height:10.2px;color:#5c5c5c;left:587.6999999999999px;transform-origin:0 0;transform:scaleX(0.93);">659595, Алтайский кр...</div>
<div class="tx" style="top:250px;font-size:10.2px;line-height:10.2px;color:#5c5c5c;left:827.9px;transform-origin:0 0;transform:scaleX(0.93);">Основной</div>
<div class="tx" style="top:250px;font-size:10.2px;line-height:10.2px;color:#5c5c5c;left:922.5999999999999px;transform-origin:0 0;transform:scaleX(0.93);">Усть-Пристанское, сельпо Больни...</div>
<div class="tx" style="top:250px;font-size:10.2px;line-height:10.2px;color:#5c5c5c;left:1097.6px;transform-origin:0 0;transform:scaleX(0.93);">Усть-Пристанское се...</div>
<div class="tx" style="top:250px;font-size:10.2px;line-height:10.2px;color:#5c5c5c;right:131.5px;transform-origin:100% 0;transform:scaleX(0.93);">48,500</div>
<div class="abs" style="left:202px;top:286.05px;width:1169px;height:1px;background:#ebebeb"></div>
<div class="tx" style="top:272px;font-size:10.2px;line-height:10.2px;color:#5c5c5c;right:1166px;transform-origin:100% 0;transform:scaleX(0.93);">5</div>
<div class="abs" style="left:258.5px;top:270.22px;width:11px;height:11px;border:1px solid #a9a9a9;border-radius:1.5px;background:#fff"></div>
<svg class="abs" style="left:259.2px;top:268.82000000000005px" width="12" height="10" viewBox="0 0 12 10"><path d="M1.3 5.2 L4.3 8.3 L10.5 0.8" fill="none" stroke="#1f9a3e" stroke-width="1.9"/></svg>
<div class="tx" style="top:272px;font-size:10.2px;line-height:10.2px;color:#5c5c5c;left:382.8px;transform-origin:0 0;transform:scaleX(0.93);">Реализация товаров и услуг КС...</div>
<div class="tx" style="top:272px;font-size:10.2px;line-height:10.2px;color:#5c5c5c;left:587.6999999999999px;transform-origin:0 0;transform:scaleX(0.93);">659580, Алтайский кр...</div>
<div class="tx" style="top:272px;font-size:10.2px;line-height:10.2px;color:#5c5c5c;left:827.9px;transform-origin:0 0;transform:scaleX(0.93);">Основной</div>
<div class="tx" style="top:272px;font-size:10.2px;line-height:10.2px;color:#5c5c5c;left:922.5999999999999px;transform-origin:0 0;transform:scaleX(0.93);">Усть-Пристанское сельпо, ул Лен...</div>
<div class="tx" style="top:272px;font-size:10.2px;line-height:10.2px;color:#5c5c5c;left:1097.6px;transform-origin:0 0;transform:scaleX(0.93);">Усть-Пристанское се...</div>
<div class="tx" style="top:272px;font-size:10.2px;line-height:10.2px;color:#5c5c5c;right:131.5px;transform-origin:100% 0;transform:scaleX(0.93);">226,040</div>
<div class="abs" style="left:202px;top:307.47999999999996px;width:1169px;height:1px;background:#ebebeb"></div>
<div class="tx" style="top:293px;font-size:10.2px;line-height:10.2px;color:#5c5c5c;right:1166px;transform-origin:100% 0;transform:scaleX(0.93);">6</div>
<div class="abs" style="left:258.5px;top:291.65px;width:11px;height:11px;border:1px solid #a9a9a9;border-radius:1.5px;background:#fff"></div>
<svg class="abs" style="left:259.2px;top:290.25px" width="12" height="10" viewBox="0 0 12 10"><path d="M1.3 5.2 L4.3 8.3 L10.5 0.8" fill="none" stroke="#1f9a3e" stroke-width="1.9"/></svg>
<div class="tx" style="top:293px;font-size:10.2px;line-height:10.2px;color:#5c5c5c;left:382.8px;transform-origin:0 0;transform:scaleX(0.93);">Реализация товаров и услуг КС...</div>
<div class="tx" style="top:293px;font-size:10.2px;line-height:10.2px;color:#5c5c5c;left:587.6999999999999px;transform-origin:0 0;transform:scaleX(0.93);">659580, Алтайский кр...</div>
<div class="tx" style="top:293px;font-size:10.2px;line-height:10.2px;color:#5c5c5c;left:827.9px;transform-origin:0 0;transform:scaleX(0.93);">Основной</div>
<div class="tx" style="top:293px;font-size:10.2px;line-height:10.2px;color:#5c5c5c;left:922.5999999999999px;transform-origin:0 0;transform:scaleX(0.93);">Усть-Пристанское сельпо, ул 1 Ма...</div>
<div class="tx" style="top:293px;font-size:10.2px;line-height:10.2px;color:#5c5c5c;left:1097.6px;transform-origin:0 0;transform:scaleX(0.93);">Усть-Пристанское се...</div>
<div class="tx" style="top:293px;font-size:10.2px;line-height:10.2px;color:#5c5c5c;right:131.5px;transform-origin:100% 0;transform:scaleX(0.93);">15,000</div>
<div class="abs" style="left:202px;top:328.90999999999997px;width:1169px;height:1px;background:#ebebeb"></div>
<div class="tx" style="top:315px;font-size:10.2px;line-height:10.2px;color:#5c5c5c;right:1166px;transform-origin:100% 0;transform:scaleX(0.93);">7</div>
<div class="abs" style="left:258.5px;top:313.08px;width:11px;height:11px;border:1px solid #a9a9a9;border-radius:1.5px;background:#fff"></div>
<svg class="abs" style="left:259.2px;top:311.68px" width="12" height="10" viewBox="0 0 12 10"><path d="M1.3 5.2 L4.3 8.3 L10.5 0.8" fill="none" stroke="#1f9a3e" stroke-width="1.9"/></svg>
<div class="tx" style="top:315px;font-size:10.2px;line-height:10.2px;color:#5c5c5c;left:382.8px;transform-origin:0 0;transform:scaleX(0.93);">Реализация товаров и услуг КС...</div>
<div class="tx" style="top:315px;font-size:10.2px;line-height:10.2px;color:#5c5c5c;left:587.6999999999999px;transform-origin:0 0;transform:scaleX(0.93);">659580, Алтайский кр...</div>
<div class="tx" style="top:315px;font-size:10.2px;line-height:10.2px;color:#5c5c5c;left:827.9px;transform-origin:0 0;transform:scaleX(0.93);">Основной</div>
<div class="tx" style="top:315px;font-size:10.2px;line-height:10.2px;color:#5c5c5c;left:922.5999999999999px;transform-origin:0 0;transform:scaleX(0.93);">Усть-Пристанское сельпо, ул 1 Ма...</div>
<div class="tx" style="top:315px;font-size:10.2px;line-height:10.2px;color:#5c5c5c;left:1097.6px;transform-origin:0 0;transform:scaleX(0.93);">Усть-Пристанское се...</div>
<div class="tx" style="top:315px;font-size:10.2px;line-height:10.2px;color:#5c5c5c;right:131.5px;transform-origin:100% 0;transform:scaleX(0.93);">98,200</div>
<div class="abs" style="left:202px;top:350.34px;width:1169px;height:1px;background:#ebebeb"></div>
<div class="tx" style="top:336px;font-size:10.2px;line-height:10.2px;color:#5c5c5c;right:1166px;transform-origin:100% 0;transform:scaleX(0.93);">8</div>
<div class="abs" style="left:258.5px;top:334.51px;width:11px;height:11px;border:1px solid #a9a9a9;border-radius:1.5px;background:#fff"></div>
<svg class="abs" style="left:259.2px;top:333.11px" width="12" height="10" viewBox="0 0 12 10"><path d="M1.3 5.2 L4.3 8.3 L10.5 0.8" fill="none" stroke="#1f9a3e" stroke-width="1.9"/></svg>
<div class="tx" style="top:336px;font-size:10.2px;line-height:10.2px;color:#5c5c5c;left:382.8px;transform-origin:0 0;transform:scaleX(0.93);">Реализация товаров и услуг КС...</div>
<div class="tx" style="top:336px;font-size:10.2px;line-height:10.2px;color:#5c5c5c;left:587.6999999999999px;transform-origin:0 0;transform:scaleX(0.93);">659580, Алтайский кр...</div>
<div class="tx" style="top:336px;font-size:10.2px;line-height:10.2px;color:#5c5c5c;left:827.9px;transform-origin:0 0;transform:scaleX(0.93);">Основной</div>
<div class="tx" style="top:336px;font-size:10.2px;line-height:10.2px;color:#5c5c5c;left:922.5999999999999px;transform-origin:0 0;transform:scaleX(0.93);">Усть-Пристанское сельпо, пер Во...</div>
<div class="tx" style="top:336px;font-size:10.2px;line-height:10.2px;color:#5c5c5c;left:1097.6px;transform-origin:0 0;transform:scaleX(0.93);">Усть-Пристанское се...</div>
<div class="tx" style="top:336px;font-size:10.2px;line-height:10.2px;color:#5c5c5c;right:131.5px;transform-origin:100% 0;transform:scaleX(0.93);">87,860</div>
<div class="abs" style="left:202px;top:371.77px;width:1169px;height:1px;background:#ebebeb"></div>
<div class="tx" style="top:357px;font-size:10.2px;line-height:10.2px;color:#5c5c5c;right:1166px;transform-origin:100% 0;transform:scaleX(0.93);">9</div>
<div class="abs" style="left:258.5px;top:355.94px;width:11px;height:11px;border:1px solid #a9a9a9;border-radius:1.5px;background:#fff"></div>
<svg class="abs" style="left:259.2px;top:354.54px" width="12" height="10" viewBox="0 0 12 10"><path d="M1.3 5.2 L4.3 8.3 L10.5 0.8" fill="none" stroke="#1f9a3e" stroke-width="1.9"/></svg>
<div class="tx" style="top:357px;font-size:10.2px;line-height:10.2px;color:#5c5c5c;left:382.8px;transform-origin:0 0;transform:scaleX(0.93);">Реализация товаров и услуг КС...</div>
<div class="tx" style="top:357px;font-size:10.2px;line-height:10.2px;color:#5c5c5c;left:587.6999999999999px;transform-origin:0 0;transform:scaleX(0.93);">659580, Алтайский кр...</div>
<div class="tx" style="top:357px;font-size:10.2px;line-height:10.2px;color:#5c5c5c;left:827.9px;transform-origin:0 0;transform:scaleX(0.93);">Основной</div>
<div class="tx" style="top:357px;font-size:10.2px;line-height:10.2px;color:#5c5c5c;left:922.5999999999999px;transform-origin:0 0;transform:scaleX(0.93);">Усть-Пристанское сельпо, ул 1 Ма...</div>
<div class="tx" style="top:357px;font-size:10.2px;line-height:10.2px;color:#5c5c5c;left:1097.6px;transform-origin:0 0;transform:scaleX(0.93);">Усть-Пристанское се...</div>
<div class="tx" style="top:357px;font-size:10.2px;line-height:10.2px;color:#5c5c5c;right:131.5px;transform-origin:100% 0;transform:scaleX(0.93);">15,000</div>
<div class="abs" style="left:202px;top:393.2px;width:1169px;height:1px;background:#ebebeb"></div>
<div class="tx" style="top:379px;font-size:10.2px;line-height:10.2px;color:#5c5c5c;right:1166px;transform-origin:100% 0;transform:scaleX(0.93);">10</div>
<div class="abs" style="left:258.5px;top:377.37px;width:11px;height:11px;border:1px solid #a9a9a9;border-radius:1.5px;background:#fff"></div>
<svg class="abs" style="left:259.2px;top:375.97px" width="12" height="10" viewBox="0 0 12 10"><path d="M1.3 5.2 L4.3 8.3 L10.5 0.8" fill="none" stroke="#1f9a3e" stroke-width="1.9"/></svg>
<div class="tx" style="top:379px;font-size:10.2px;line-height:10.2px;color:#5c5c5c;left:382.8px;transform-origin:0 0;transform:scaleX(0.93);">Реализация товаров и услуг КС...</div>
<div class="tx" style="top:379px;font-size:10.2px;line-height:10.2px;color:#5c5c5c;left:587.6999999999999px;transform-origin:0 0;transform:scaleX(0.93);">659580, Алтайский кр...</div>
<div class="tx" style="top:379px;font-size:10.2px;line-height:10.2px;color:#5c5c5c;left:827.9px;transform-origin:0 0;transform:scaleX(0.93);">Основной</div>
<div class="tx" style="top:379px;font-size:10.2px;line-height:10.2px;color:#5c5c5c;left:922.5999999999999px;transform-origin:0 0;transform:scaleX(0.93);">Усть-Пристанское сельпо, ул 1 Ма...</div>
<div class="tx" style="top:379px;font-size:10.2px;line-height:10.2px;color:#5c5c5c;left:1097.6px;transform-origin:0 0;transform:scaleX(0.93);">Усть-Пристанское се...</div>
<div class="tx" style="top:379px;font-size:10.2px;line-height:10.2px;color:#5c5c5c;right:131.5px;transform-origin:100% 0;transform:scaleX(0.93);">152,840</div>
<div class="abs" style="left:202px;top:414.63px;width:1169px;height:1px;background:#ebebeb"></div>
<div class="tx" style="top:400px;font-size:10.2px;line-height:10.2px;color:#5c5c5c;right:1166px;transform-origin:100% 0;transform:scaleX(0.93);">11</div>
<div class="abs" style="left:258.5px;top:398.8px;width:11px;height:11px;border:1px solid #a9a9a9;border-radius:1.5px;background:#fff"></div>
<svg class="abs" style="left:259.2px;top:397.40000000000003px" width="12" height="10" viewBox="0 0 12 10"><path d="M1.3 5.2 L4.3 8.3 L10.5 0.8" fill="none" stroke="#1f9a3e" stroke-width="1.9"/></svg>
<div class="tx" style="top:400px;font-size:10.2px;line-height:10.2px;color:#5c5c5c;left:382.8px;transform-origin:0 0;transform:scaleX(0.93);">Реализация товаров и услуг КС...</div>
<div class="tx" style="top:400px;font-size:10.2px;line-height:10.2px;color:#5c5c5c;left:587.6999999999999px;transform-origin:0 0;transform:scaleX(0.93);">659580, Алтайский кр...</div>
<div class="tx" style="top:400px;font-size:10.2px;line-height:10.2px;color:#5c5c5c;left:827.9px;transform-origin:0 0;transform:scaleX(0.93);">Основной</div>
<div class="tx" style="top:400px;font-size:10.2px;line-height:10.2px;color:#5c5c5c;left:922.5999999999999px;transform-origin:0 0;transform:scaleX(0.93);">Усть-Пристанское сельпо, ул.Лен...</div>
<div class="tx" style="top:400px;font-size:10.2px;line-height:10.2px;color:#5c5c5c;left:1097.6px;transform-origin:0 0;transform:scaleX(0.93);">Усть-Пристанское се...</div>
<div class="tx" style="top:400px;font-size:10.2px;line-height:10.2px;color:#5c5c5c;right:131.5px;transform-origin:100% 0;transform:scaleX(0.93);">108,180</div>
<div class="abs" style="left:202px;top:436.06px;width:1169px;height:1px;background:#ebebeb"></div>
<div class="tx" style="top:422px;font-size:10.2px;line-height:10.2px;color:#5c5c5c;right:1166px;transform-origin:100% 0;transform:scaleX(0.93);">12</div>
<div class="abs" style="left:258.5px;top:420.23px;width:11px;height:11px;border:1px solid #a9a9a9;border-radius:1.5px;background:#fff"></div>
<svg class="abs" style="left:259.2px;top:418.83000000000004px" width="12" height="10" viewBox="0 0 12 10"><path d="M1.3 5.2 L4.3 8.3 L10.5 0.8" fill="none" stroke="#1f9a3e" stroke-width="1.9"/></svg>
<div class="tx" style="top:422px;font-size:10.2px;line-height:10.2px;color:#5c5c5c;left:382.8px;transform-origin:0 0;transform:scaleX(0.93);">Реализация товаров и услуг КС...</div>
<div class="tx" style="top:422px;font-size:10.2px;line-height:10.2px;color:#5c5c5c;left:587.6999999999999px;transform-origin:0 0;transform:scaleX(0.93);">659580, Алтайский кр...</div>
<div class="tx" style="top:422px;font-size:10.2px;line-height:10.2px;color:#5c5c5c;left:827.9px;transform-origin:0 0;transform:scaleX(0.93);">Основной</div>
<div class="tx" style="top:422px;font-size:10.2px;line-height:10.2px;color:#5c5c5c;left:922.5999999999999px;transform-origin:0 0;transform:scaleX(0.93);">Усть-Пристанское сельпо, ул Коро...</div>
<div class="tx" style="top:422px;font-size:10.2px;line-height:10.2px;color:#5c5c5c;left:1097.6px;transform-origin:0 0;transform:scaleX(0.93);">Усть-Пристанское се...</div>
<div class="tx" style="top:422px;font-size:10.2px;line-height:10.2px;color:#5c5c5c;right:131.5px;transform-origin:100% 0;transform:scaleX(0.93);">405,820</div>
<div class="abs" style="left:202px;top:457.48999999999995px;width:1169px;height:1px;background:#ebebeb"></div>
<div class="tx" style="top:443px;font-size:10.2px;line-height:10.2px;color:#5c5c5c;right:1166px;transform-origin:100% 0;transform:scaleX(0.93);">13</div>
<div class="abs" style="left:258.5px;top:441.65999999999997px;width:11px;height:11px;border:1px solid #a9a9a9;border-radius:1.5px;background:#fff"></div>
<svg class="abs" style="left:259.2px;top:440.26px" width="12" height="10" viewBox="0 0 12 10"><path d="M1.3 5.2 L4.3 8.3 L10.5 0.8" fill="none" stroke="#1f9a3e" stroke-width="1.9"/></svg>
<svg class="abs" style="left:285.5px;top:439.26px" width="11" height="10" viewBox="0 0 11 10"><path d="M0.8 5.4 L3.8 8.6 L9.9 0.9" fill="none" stroke="#1f9a3e" stroke-width="1.8"/></svg>
<div class="tx" style="top:443px;font-size:10.2px;line-height:10.2px;color:#5c5c5c;right:1041.5px;transform-origin:100% 0;transform:scaleX(0.93);">10 442,20</div>
<div class="tx" style="top:443px;font-size:10.2px;line-height:10.2px;color:#5c5c5c;left:382.8px;transform-origin:0 0;transform:scaleX(0.93);">Реализация товаров и услуг КС...</div>
<div class="tx" style="top:443px;font-size:10.2px;line-height:10.2px;color:#5c5c5c;left:587.6999999999999px;transform-origin:0 0;transform:scaleX(0.93);">658129, Алтайский кр...</div>
<div class="tx" style="top:443px;font-size:10.2px;line-height:10.2px;color:#5c5c5c;left:827.9px;transform-origin:0 0;transform:scaleX(0.93);">Основной</div>
<div class="tx" style="top:443px;font-size:10.2px;line-height:10.2px;color:#5c5c5c;left:922.5999999999999px;transform-origin:0 0;transform:scaleX(0.93);">Чеботарева Алла Витальевна</div>
<div class="tx" style="top:443px;font-size:10.2px;line-height:10.2px;color:#5c5c5c;left:1097.6px;transform-origin:0 0;transform:scaleX(0.93);">Чеботарева А.В. ТТ</div>
<div class="tx" style="top:443px;font-size:10.2px;line-height:10.2px;color:#5c5c5c;right:131.5px;transform-origin:100% 0;transform:scaleX(0.93);">235,210</div>
<div class="abs" style="left:202px;top:478.91999999999996px;width:1169px;height:1px;background:#ebebeb"></div>
<div class="tx" style="top:465px;font-size:10.2px;line-height:10.2px;color:#5c5c5c;right:1166px;transform-origin:100% 0;transform:scaleX(0.93);">14</div>
<div class="abs" style="left:258.5px;top:463.09px;width:11px;height:11px;border:1px solid #a9a9a9;border-radius:1.5px;background:#fff"></div>
<svg class="abs" style="left:259.2px;top:461.69px" width="12" height="10" viewBox="0 0 12 10"><path d="M1.3 5.2 L4.3 8.3 L10.5 0.8" fill="none" stroke="#1f9a3e" stroke-width="1.9"/></svg>
<svg class="abs" style="left:285.5px;top:460.69px" width="11" height="10" viewBox="0 0 11 10"><path d="M0.8 5.4 L3.8 8.6 L9.9 0.9" fill="none" stroke="#1f9a3e" stroke-width="1.8"/></svg>
<div class="tx" style="top:465px;font-size:10.2px;line-height:10.2px;color:#5c5c5c;right:1041.5px;transform-origin:100% 0;transform:scaleX(0.93);">3 781,20</div>
<div class="tx" style="top:465px;font-size:10.2px;line-height:10.2px;color:#5c5c5c;left:382.8px;transform-origin:0 0;transform:scaleX(0.93);">Реализация товаров и услуг КС...</div>
<div class="tx" style="top:465px;font-size:10.2px;line-height:10.2px;color:#5c5c5c;left:587.6999999999999px;transform-origin:0 0;transform:scaleX(0.93);">658150, Алтайский кр...</div>
<div class="tx" style="top:465px;font-size:10.2px;line-height:10.2px;color:#5c5c5c;left:827.9px;transform-origin:0 0;transform:scaleX(0.93);">Основной</div>
<div class="tx" style="top:465px;font-size:10.2px;line-height:10.2px;color:#5c5c5c;left:922.5999999999999px;transform-origin:0 0;transform:scaleX(0.93);">Назаров Азар Мирверди Оглы(КА)</div>
<div class="tx" style="top:465px;font-size:10.2px;line-height:10.2px;color:#5c5c5c;left:1097.6px;transform-origin:0 0;transform:scaleX(0.93);">Назаров А.М.О. Алт...</div>
<div class="tx" style="top:465px;font-size:10.2px;line-height:10.2px;color:#5c5c5c;right:131.5px;transform-origin:100% 0;transform:scaleX(0.93);">64,040</div>
<div class="abs" style="left:202px;top:500.34999999999997px;width:1169px;height:1px;background:#ebebeb"></div>
<div class="tx" style="top:486px;font-size:10.2px;line-height:10.2px;color:#5c5c5c;right:1166px;transform-origin:100% 0;transform:scaleX(0.93);">15</div>
<div class="abs" style="left:258.5px;top:484.52px;width:11px;height:11px;border:1px solid #a9a9a9;border-radius:1.5px;background:#fff"></div>
<svg class="abs" style="left:259.2px;top:483.12px" width="12" height="10" viewBox="0 0 12 10"><path d="M1.3 5.2 L4.3 8.3 L10.5 0.8" fill="none" stroke="#1f9a3e" stroke-width="1.9"/></svg>
<svg class="abs" style="left:285.5px;top:482.12px" width="11" height="10" viewBox="0 0 11 10"><path d="M0.8 5.4 L3.8 8.6 L9.9 0.9" fill="none" stroke="#1f9a3e" stroke-width="1.8"/></svg>
<div class="tx" style="top:486px;font-size:10.2px;line-height:10.2px;color:#5c5c5c;right:1041.5px;transform-origin:100% 0;transform:scaleX(0.93);">2 362,00</div>
<div class="tx" style="top:486px;font-size:10.2px;line-height:10.2px;color:#5c5c5c;left:382.8px;transform-origin:0 0;transform:scaleX(0.93);">Реализация товаров и услуг КС...</div>
<div class="tx" style="top:486px;font-size:10.2px;line-height:10.2px;color:#5c5c5c;left:587.6999999999999px;transform-origin:0 0;transform:scaleX(0.93);">658150, Алтайский кр...</div>
<div class="tx" style="top:486px;font-size:10.2px;line-height:10.2px;color:#5c5c5c;left:827.9px;transform-origin:0 0;transform:scaleX(0.93);">Основной</div>
<div class="tx" style="top:486px;font-size:10.2px;line-height:10.2px;color:#5c5c5c;left:922.5999999999999px;transform-origin:0 0;transform:scaleX(0.93);">Ледак Альбина Евстафьевна</div>
<div class="tx" style="top:486px;font-size:10.2px;line-height:10.2px;color:#5c5c5c;left:1097.6px;transform-origin:0 0;transform:scaleX(0.93);">Ледак А.Е. ТТ</div>
<div class="tx" style="top:486px;font-size:10.2px;line-height:10.2px;color:#5c5c5c;right:131.5px;transform-origin:100% 0;transform:scaleX(0.93);">68,420</div>
<div class="abs" style="left:202px;top:521.78px;width:1169px;height:1px;background:#ebebeb"></div>
<div class="tx" style="top:507px;font-size:10.2px;line-height:10.2px;color:#5c5c5c;right:1166px;transform-origin:100% 0;transform:scaleX(0.93);">16</div>
<div class="abs" style="left:258.5px;top:505.95px;width:11px;height:11px;border:1px solid #a9a9a9;border-radius:1.5px;background:#fff"></div>
<svg class="abs" style="left:259.2px;top:504.55px" width="12" height="10" viewBox="0 0 12 10"><path d="M1.3 5.2 L4.3 8.3 L10.5 0.8" fill="none" stroke="#1f9a3e" stroke-width="1.9"/></svg>
<svg class="abs" style="left:285.5px;top:503.55px" width="11" height="10" viewBox="0 0 11 10"><path d="M0.8 5.4 L3.8 8.6 L9.9 0.9" fill="none" stroke="#1f9a3e" stroke-width="1.8"/></svg>
<div class="tx" style="top:507px;font-size:10.2px;line-height:10.2px;color:#5c5c5c;right:1041.5px;transform-origin:100% 0;transform:scaleX(0.93);">2 232,00</div>
<div class="tx" style="top:507px;font-size:10.2px;line-height:10.2px;color:#5c5c5c;left:382.8px;transform-origin:0 0;transform:scaleX(0.93);">Реализация товаров и услуг КС...</div>
<div class="tx" style="top:507px;font-size:10.2px;line-height:10.2px;color:#5c5c5c;left:587.6999999999999px;transform-origin:0 0;transform:scaleX(0.93);">658150, Алтайский кр...</div>
<div class="tx" style="top:507px;font-size:10.2px;line-height:10.2px;color:#5c5c5c;left:827.9px;transform-origin:0 0;transform:scaleX(0.93);">Основной</div>
<div class="tx" style="top:507px;font-size:10.2px;line-height:10.2px;color:#5c5c5c;left:922.5999999999999px;transform-origin:0 0;transform:scaleX(0.93);">Гвоздева Л.П.*</div>
<div class="tx" style="top:507px;font-size:10.2px;line-height:10.2px;color:#5c5c5c;left:1097.6px;transform-origin:0 0;transform:scaleX(0.93);">Гвоздева Л.П. ТТ*</div>
<div class="tx" style="top:507px;font-size:10.2px;line-height:10.2px;color:#5c5c5c;right:131.5px;transform-origin:100% 0;transform:scaleX(0.93);">61,180</div>
<div class="abs" style="left:202px;top:543.2099999999999px;width:1169px;height:1px;background:#ebebeb"></div>
<div class="tx" style="top:529px;font-size:10.2px;line-height:10.2px;color:#5c5c5c;right:1166px;transform-origin:100% 0;transform:scaleX(0.93);">17</div>
<div class="abs" style="left:258.5px;top:527.38px;width:11px;height:11px;border:1px solid #a9a9a9;border-radius:1.5px;background:#fff"></div>
<svg class="abs" style="left:259.2px;top:525.98px" width="12" height="10" viewBox="0 0 12 10"><path d="M1.3 5.2 L4.3 8.3 L10.5 0.8" fill="none" stroke="#1f9a3e" stroke-width="1.9"/></svg>
<div class="tx" style="top:529px;font-size:10.2px;line-height:10.2px;color:#5c5c5c;left:382.8px;transform-origin:0 0;transform:scaleX(0.93);">Реализация товаров и услуг КС...</div>
<div class="tx" style="top:529px;font-size:10.2px;line-height:10.2px;color:#5c5c5c;left:587.6999999999999px;transform-origin:0 0;transform:scaleX(0.93);">658150, Алтайский кр...</div>
<div class="tx" style="top:529px;font-size:10.2px;line-height:10.2px;color:#5c5c5c;left:827.9px;transform-origin:0 0;transform:scaleX(0.93);">Основной</div>
<div class="tx" style="top:529px;font-size:10.2px;line-height:10.2px;color:#5c5c5c;left:922.5999999999999px;transform-origin:0 0;transform:scaleX(0.93);">Потапова Елена Алексеевна(КА)</div>
<div class="tx" style="top:529px;font-size:10.2px;line-height:10.2px;color:#5c5c5c;left:1097.6px;transform-origin:0 0;transform:scaleX(0.93);">Потапова Е.А. Горьк...</div>
<div class="tx" style="top:529px;font-size:10.2px;line-height:10.2px;color:#5c5c5c;right:131.5px;transform-origin:100% 0;transform:scaleX(0.93);">4,000</div>
<div class="abs" style="left:202px;top:564.6399999999999px;width:1169px;height:1px;background:#ebebeb"></div>
<div class="tx" style="top:550px;font-size:10.2px;line-height:10.2px;color:#5c5c5c;right:1166px;transform-origin:100% 0;transform:scaleX(0.93);">18</div>
<div class="abs" style="left:258.5px;top:548.81px;width:11px;height:11px;border:1px solid #a9a9a9;border-radius:1.5px;background:#fff"></div>
<svg class="abs" style="left:259.2px;top:547.41px" width="12" height="10" viewBox="0 0 12 10"><path d="M1.3 5.2 L4.3 8.3 L10.5 0.8" fill="none" stroke="#1f9a3e" stroke-width="1.9"/></svg>
<div class="tx" style="top:550px;font-size:10.2px;line-height:10.2px;color:#5c5c5c;left:382.8px;transform-origin:0 0;transform:scaleX(0.93);">Реализация товаров и услуг КС...</div>
<div class="tx" style="top:550px;font-size:10.2px;line-height:10.2px;color:#5c5c5c;left:587.6999999999999px;transform-origin:0 0;transform:scaleX(0.93);">658150, Алтайский кр...</div>
<div class="tx" style="top:550px;font-size:10.2px;line-height:10.2px;color:#5c5c5c;left:827.9px;transform-origin:0 0;transform:scaleX(0.93);">Основной</div>
<div class="tx" style="top:550px;font-size:10.2px;line-height:10.2px;color:#5c5c5c;left:922.5999999999999px;transform-origin:0 0;transform:scaleX(0.93);">Потапова Елена Алексеевна(КА)</div>
<div class="tx" style="top:550px;font-size:10.2px;line-height:10.2px;color:#5c5c5c;left:1097.6px;transform-origin:0 0;transform:scaleX(0.93);">Потапова Е.А. Горьк...</div>
<div class="tx" style="top:550px;font-size:10.2px;line-height:10.2px;color:#5c5c5c;right:131.5px;transform-origin:100% 0;transform:scaleX(0.93);">201,170</div>
<div class="abs" style="left:202px;top:586.0699999999999px;width:1169px;height:1px;background:#ebebeb"></div>
<div class="tx" style="top:572px;font-size:10.2px;line-height:10.2px;color:#5c5c5c;right:1166px;transform-origin:100% 0;transform:scaleX(0.93);">19</div>
<div class="abs" style="left:258.5px;top:570.24px;width:11px;height:11px;border:1px solid #a9a9a9;border-radius:1.5px;background:#fff"></div>
<svg class="abs" style="left:259.2px;top:568.84px" width="12" height="10" viewBox="0 0 12 10"><path d="M1.3 5.2 L4.3 8.3 L10.5 0.8" fill="none" stroke="#1f9a3e" stroke-width="1.9"/></svg>
<div class="tx" style="top:572px;font-size:10.2px;line-height:10.2px;color:#5c5c5c;left:382.8px;transform-origin:0 0;transform:scaleX(0.93);">Реализация товаров и услуг КС...</div>
<div class="tx" style="top:572px;font-size:10.2px;line-height:10.2px;color:#5c5c5c;left:587.6999999999999px;transform-origin:0 0;transform:scaleX(0.93);">658150, Алтайский кр...</div>
<div class="tx" style="top:572px;font-size:10.2px;line-height:10.2px;color:#5c5c5c;left:827.9px;transform-origin:0 0;transform:scaleX(0.93);">Основной</div>
<div class="tx" style="top:572px;font-size:10.2px;line-height:10.2px;color:#5c5c5c;left:922.5999999999999px;transform-origin:0 0;transform:scaleX(0.93);">Лупенко Ольга Алексеевна</div>
<div class="tx" style="top:572px;font-size:10.2px;line-height:10.2px;color:#5c5c5c;left:1097.6px;transform-origin:0 0;transform:scaleX(0.93);">Лупенко О.А. ТТ</div>
<div class="tx" style="top:572px;font-size:10.2px;line-height:10.2px;color:#5c5c5c;right:131.5px;transform-origin:100% 0;transform:scaleX(0.93);">110,370</div>
<div class="abs" style="left:202px;top:607.5px;width:1169px;height:1px;background:#ebebeb"></div>
<div class="tx" style="top:593px;font-size:10.2px;line-height:10.2px;color:#5c5c5c;right:1166px;transform-origin:100% 0;transform:scaleX(0.93);">20</div>
<div class="abs" style="left:258.5px;top:591.6700000000001px;width:11px;height:11px;border:1px solid #a9a9a9;border-radius:1.5px;background:#fff"></div>
<svg class="abs" style="left:259.2px;top:590.2700000000001px" width="12" height="10" viewBox="0 0 12 10"><path d="M1.3 5.2 L4.3 8.3 L10.5 0.8" fill="none" stroke="#1f9a3e" stroke-width="1.9"/></svg>
<svg class="abs" style="left:285.5px;top:589.2700000000001px" width="11" height="10" viewBox="0 0 11 10"><path d="M0.8 5.4 L3.8 8.6 L9.9 0.9" fill="none" stroke="#1f9a3e" stroke-width="1.8"/></svg>
<div class="tx" style="top:593px;font-size:10.2px;line-height:10.2px;color:#5c5c5c;right:1041.5px;transform-origin:100% 0;transform:scaleX(0.93);">1 356,00</div>
<div class="tx" style="top:593px;font-size:10.2px;line-height:10.2px;color:#5c5c5c;left:382.8px;transform-origin:0 0;transform:scaleX(0.93);">Реализация товаров и услуг КС...</div>
<div class="tx" style="top:593px;font-size:10.2px;line-height:10.2px;color:#5c5c5c;left:587.6999999999999px;transform-origin:0 0;transform:scaleX(0.93);">658150, Алтайский кр...</div>
<div class="tx" style="top:593px;font-size:10.2px;line-height:10.2px;color:#5c5c5c;left:827.9px;transform-origin:0 0;transform:scaleX(0.93);">Основной</div>
<div class="tx" style="top:593px;font-size:10.2px;line-height:10.2px;color:#5c5c5c;left:922.5999999999999px;transform-origin:0 0;transform:scaleX(0.93);">Ледак Александр Михайлович</div>
<div class="tx" style="top:593px;font-size:10.2px;line-height:10.2px;color:#5c5c5c;left:1097.6px;transform-origin:0 0;transform:scaleX(0.93);">Ледак А.М. Горьког...</div>
<div class="tx" style="top:593px;font-size:10.2px;line-height:10.2px;color:#5c5c5c;right:131.5px;transform-origin:100% 0;transform:scaleX(0.93);">38,680</div>
<div class="abs" style="left:202px;top:628.93px;width:1169px;height:1px;background:#ebebeb"></div>
<div class="tx" style="top:615px;font-size:10.2px;line-height:10.2px;color:#5c5c5c;right:1166px;transform-origin:100% 0;transform:scaleX(0.93);">21</div>
<div class="abs" style="left:258.5px;top:613.1px;width:11px;height:11px;border:1px solid #a9a9a9;border-radius:1.5px;background:#fff"></div>
<svg class="abs" style="left:259.2px;top:611.7px" width="12" height="10" viewBox="0 0 12 10"><path d="M1.3 5.2 L4.3 8.3 L10.5 0.8" fill="none" stroke="#1f9a3e" stroke-width="1.9"/></svg>
<svg class="abs" style="left:285.5px;top:610.7px" width="11" height="10" viewBox="0 0 11 10"><path d="M0.8 5.4 L3.8 8.6 L9.9 0.9" fill="none" stroke="#1f9a3e" stroke-width="1.8"/></svg>
<div class="tx" style="top:615px;font-size:10.2px;line-height:10.2px;color:#5c5c5c;right:1041.5px;transform-origin:100% 0;transform:scaleX(0.93);">5 279,00</div>
<div class="tx" style="top:615px;font-size:10.2px;line-height:10.2px;color:#5c5c5c;left:382.8px;transform-origin:0 0;transform:scaleX(0.93);">Реализация товаров и услуг КС...</div>
<div class="tx" style="top:615px;font-size:10.2px;line-height:10.2px;color:#5c5c5c;left:587.6999999999999px;transform-origin:0 0;transform:scaleX(0.93);">658150, Алтайский кр...</div>
<div class="tx" style="top:615px;font-size:10.2px;line-height:10.2px;color:#5c5c5c;left:827.9px;transform-origin:0 0;transform:scaleX(0.93);">Основной</div>
<div class="tx" style="top:615px;font-size:10.2px;line-height:10.2px;color:#5c5c5c;left:922.5999999999999px;transform-origin:0 0;transform:scaleX(0.93);">Ледак Александр Михайлович</div>
<div class="tx" style="top:615px;font-size:10.2px;line-height:10.2px;color:#5c5c5c;left:1097.6px;transform-origin:0 0;transform:scaleX(0.93);">Ледак А.М. Ленина,...</div>
<div class="tx" style="top:615px;font-size:10.2px;line-height:10.2px;color:#5c5c5c;right:131.5px;transform-origin:100% 0;transform:scaleX(0.93);">191,460</div>
<div class="abs" style="left:202px;top:650.3599999999999px;width:1169px;height:1px;background:#ebebeb"></div>
<div class="tx" style="top:636px;font-size:10.2px;line-height:10.2px;color:#5c5c5c;right:1166px;transform-origin:100% 0;transform:scaleX(0.93);">22</div>
<div class="abs" style="left:258.5px;top:634.53px;width:11px;height:11px;border:1px solid #a9a9a9;border-radius:1.5px;background:#fff"></div>
<svg class="abs" style="left:259.2px;top:633.13px" width="12" height="10" viewBox="0 0 12 10"><path d="M1.3 5.2 L4.3 8.3 L10.5 0.8" fill="none" stroke="#1f9a3e" stroke-width="1.9"/></svg>
<svg class="abs" style="left:285.5px;top:632.13px" width="11" height="10" viewBox="0 0 11 10"><path d="M0.8 5.4 L3.8 8.6 L9.9 0.9" fill="none" stroke="#1f9a3e" stroke-width="1.8"/></svg>
<div class="tx" style="top:636px;font-size:10.2px;line-height:10.2px;color:#5c5c5c;right:1041.5px;transform-origin:100% 0;transform:scaleX(0.93);">3 651,00</div>
<div class="tx" style="top:636px;font-size:10.2px;line-height:10.2px;color:#5c5c5c;left:382.8px;transform-origin:0 0;transform:scaleX(0.93);">Реализация товаров и услуг КС...</div>
<div class="tx" style="top:636px;font-size:10.2px;line-height:10.2px;color:#5c5c5c;left:587.6999999999999px;transform-origin:0 0;transform:scaleX(0.93);">658150, Алтайский кр...</div>
<div class="tx" style="top:636px;font-size:10.2px;line-height:10.2px;color:#5c5c5c;left:827.9px;transform-origin:0 0;transform:scaleX(0.93);">Основной</div>
<div class="tx" style="top:636px;font-size:10.2px;line-height:10.2px;color:#5c5c5c;left:922.5999999999999px;transform-origin:0 0;transform:scaleX(0.93);">Бурматова Раиса Яковлевна</div>
<div class="tx" style="top:636px;font-size:10.2px;line-height:10.2px;color:#5c5c5c;left:1097.6px;transform-origin:0 0;transform:scaleX(0.93);">Бурматова Р.Я. ТТ</div>
<div class="tx" style="top:636px;font-size:10.2px;line-height:10.2px;color:#5c5c5c;right:131.5px;transform-origin:100% 0;transform:scaleX(0.93);">57,879</div>
<div class="abs" style="left:202px;top:671.79px;width:1169px;height:1px;background:#ebebeb"></div>
<div class="tx" style="top:657px;font-size:10.2px;line-height:10.2px;color:#5c5c5c;right:1166px;transform-origin:100% 0;transform:scaleX(0.93);">23</div>
<div class="abs" style="left:258.5px;top:655.96px;width:11px;height:11px;border:1px solid #a9a9a9;border-radius:1.5px;background:#fff"></div>
<svg class="abs" style="left:259.2px;top:654.5600000000001px" width="12" height="10" viewBox="0 0 12 10"><path d="M1.3 5.2 L4.3 8.3 L10.5 0.8" fill="none" stroke="#1f9a3e" stroke-width="1.9"/></svg>
<div class="tx" style="top:657px;font-size:10.2px;line-height:10.2px;color:#5c5c5c;left:382.8px;transform-origin:0 0;transform:scaleX(0.93);">Реализация товаров и услуг КС...</div>
<div class="tx" style="top:657px;font-size:10.2px;line-height:10.2px;color:#5c5c5c;left:587.6999999999999px;transform-origin:0 0;transform:scaleX(0.93);">658150, Алтайский кр...</div>
<div class="tx" style="top:657px;font-size:10.2px;line-height:10.2px;color:#5c5c5c;left:827.9px;transform-origin:0 0;transform:scaleX(0.93);">Основной</div>
<div class="tx" style="top:657px;font-size:10.2px;line-height:10.2px;color:#5c5c5c;left:922.5999999999999px;transform-origin:0 0;transform:scaleX(0.93);">Шабанин Сергей Сергеевич</div>
<div class="tx" style="top:657px;font-size:10.2px;line-height:10.2px;color:#5c5c5c;left:1097.6px;transform-origin:0 0;transform:scaleX(0.93);">Шабанин С.С.&nbsp; ТТ</div>
<div class="tx" style="top:657px;font-size:10.2px;line-height:10.2px;color:#5c5c5c;right:131.5px;transform-origin:100% 0;transform:scaleX(0.93);">171,680</div>
<div class="abs" style="left:202px;top:693.2199999999999px;width:1169px;height:1px;background:#ebebeb"></div>
<div class="tx" style="top:679px;font-size:10.2px;line-height:10.2px;color:#5c5c5c;right:1166px;transform-origin:100% 0;transform:scaleX(0.93);">24</div>
<div class="abs" style="left:258.5px;top:677.39px;width:11px;height:11px;border:1px solid #a9a9a9;border-radius:1.5px;background:#fff"></div>
<svg class="abs" style="left:259.2px;top:675.99px" width="12" height="10" viewBox="0 0 12 10"><path d="M1.3 5.2 L4.3 8.3 L10.5 0.8" fill="none" stroke="#1f9a3e" stroke-width="1.9"/></svg>
<svg class="abs" style="left:285.5px;top:674.99px" width="11" height="10" viewBox="0 0 11 10"><path d="M0.8 5.4 L3.8 8.6 L9.9 0.9" fill="none" stroke="#1f9a3e" stroke-width="1.8"/></svg>
<div class="tx" style="top:679px;font-size:10.2px;line-height:10.2px;color:#5c5c5c;right:1041.5px;transform-origin:100% 0;transform:scaleX(0.93);">4 681,00</div>
<div class="tx" style="top:679px;font-size:10.2px;line-height:10.2px;color:#5c5c5c;left:382.8px;transform-origin:0 0;transform:scaleX(0.93);">Реализация товаров и услуг КС...</div>
<div class="tx" style="top:679px;font-size:10.2px;line-height:10.2px;color:#5c5c5c;left:587.6999999999999px;transform-origin:0 0;transform:scaleX(0.93);">658150, Алтайский кр...</div>
<div class="tx" style="top:679px;font-size:10.2px;line-height:10.2px;color:#5c5c5c;left:827.9px;transform-origin:0 0;transform:scaleX(0.93);">Основной</div>
<div class="tx" style="top:679px;font-size:10.2px;line-height:10.2px;color:#5c5c5c;left:922.5999999999999px;transform-origin:0 0;transform:scaleX(0.93);">Попова Елизавета Владимировна</div>
<div class="tx" style="top:679px;font-size:10.2px;line-height:10.2px;color:#5c5c5c;left:1097.6px;transform-origin:0 0;transform:scaleX(0.93);">Попова Е.В. ТТ</div>
<div class="tx" style="top:679px;font-size:10.2px;line-height:10.2px;color:#5c5c5c;right:131.5px;transform-origin:100% 0;transform:scaleX(0.93);">88,300</div>
<div class="abs" style="left:202px;top:692.2px;width:1169px;height:22.799999999999955px;background:#f0f0f0"></div>
<div class="abs" style="left:250.8px;top:692.2px;width:1px;height:22.799999999999955px;background:#dcdcdc"></div>
<div class="abs" style="left:275.8px;top:692.2px;width:1px;height:22.799999999999955px;background:#dcdcdc"></div>
<div class="abs" style="left:308.3px;top:692.2px;width:1px;height:22.799999999999955px;background:#dcdcdc"></div>
<div class="abs" style="left:376.2px;top:692.2px;width:1px;height:22.799999999999955px;background:#dcdcdc"></div>
<div class="abs" style="left:539.0px;top:692.2px;width:1px;height:22.799999999999955px;background:#dcdcdc"></div>
<div class="abs" style="left:580.9px;top:692.2px;width:1px;height:22.799999999999955px;background:#dcdcdc"></div>
<div class="abs" style="left:701.5px;top:692.2px;width:1px;height:22.799999999999955px;background:#dcdcdc"></div>
<div class="abs" style="left:783.1px;top:692.2px;width:1px;height:22.799999999999955px;background:#dcdcdc"></div>
<div class="abs" style="left:821.1px;top:692.2px;width:1px;height:22.799999999999955px;background:#dcdcdc"></div>
<div class="abs" style="left:914.8px;top:692.2px;width:1px;height:22.799999999999955px;background:#dcdcdc"></div>
<div class="abs" style="left:1089.8px;top:692.2px;width:1px;height:22.799999999999955px;background:#dcdcdc"></div>
<div class="abs" style="left:1203.8px;top:692.2px;width:1px;height:22.799999999999955px;background:#dcdcdc"></div>
<div class="abs" style="left:1284.9px;top:692.2px;width:1px;height:22.799999999999955px;background:#dcdcdc"></div>
<div class="abs" style="left:1370.5px;top:692.2px;width:1px;height:22.799999999999955px;background:#dcdcdc"></div>
<div class="abs" style="left:202px;top:692px;width:1169px;height:1px;background:#d4d4d4"></div>
<div class="tx" style="top:699px;font-size:10.2px;line-height:10.2px;color:#5c5c5c;right:131.5px;transform-origin:100% 0;transform:scaleX(0.93);">2 605,349</div>
<div class="abs" style="left:1373.4px;top:174px;width:5.6px;height:524px;border-radius:2.8px;background:#d8d8d8"></div>
<div class="abs" style="left:1373.4px;top:174px;width:5.6px;height:501px;border-radius:2.8px;background:#979797"></div>
<svg class="abs" style="left:1373.7px;top:164px" width="5" height="3" viewBox="0 0 5 3"><path d="M0 3H5L2.5 0Z" fill="#c8c8c8"/></svg>
<svg class="abs" style="left:1374px;top:706px" width="5" height="3" viewBox="0 0 5 3"><path d="M0 0H5L2.5 3Z" fill="#444"/></svg>
<svg class="abs" style="left:208px;top:718px" width="3" height="5" viewBox="0 0 3 5"><path d="M3 0V5L0 2.5Z" fill="#c8c8c8"/></svg>
<div class="abs" style="left:219px;top:717.5px;width:1135px;height:6px;border-radius:3px;background:#d4d4d4"></div>
<div class="abs" style="left:219px;top:717.5px;width:895px;height:6px;border-radius:3px;background:#8c8c8c"></div>
<svg class="abs" style="left:1361px;top:718px" width="3" height="5" viewBox="0 0 3 5"><path d="M0 0V5L3 2.5Z" fill="#444"/></svg>
<div class="tx" style="top:745px;font-size:10.2px;line-height:10.2px;color:#5c5c5c;left:193px;transform-origin:0 0;transform:scaleX(0.93);">Ответственный:</div>
<div class="abs" style="left:266px;top:740px;width:303px;height:18.5px;border:1px solid #bdbdbd;border-radius:2px;background:#fff"></div>
<div class="tx" style="top:745px;font-size:10.2px;line-height:10.2px;color:#333;left:269px;transform-origin:0 0;transform:scaleX(0.93);">Гаврилова Серафима</div>
<div class="abs" style="left:537px;top:741px;width:1px;height:16.5px;background:#dcdcdc"></div>
<div class="abs" style="left:553px;top:741px;width:1px;height:16.5px;background:#dcdcdc"></div>
<svg class="abs" style="left:543.5px;top:747.8px" width="4" height="3" viewBox="0 0 4 3"><path d="M0 0H4L2 3Z" fill="#444"/></svg>
<svg class="abs" style="left:557.5px;top:745px" width="8" height="7.5" viewBox="0 0 8 7.5"><rect x="3.3" y="0.6" width="4" height="3.9" fill="#fff" stroke="#555" stroke-width="0.8"/><path d="M0.6 2.8 V6.8 H4.3" fill="none" stroke="#555" stroke-width="0.8"/></svg>
<div class="tx" style="top:699px;font-size:15px;line-height:15px;color:rgba(150,150,150,.6);left:1021.5px;transform-origin:0 0;transform:scaleX(0.985);">Активация Windows</div>
<div class="tx" style="top:719px;font-size:11px;line-height:11px;color:rgba(150,150,150,.6);left:1022px;transform-origin:0 0;">Чтобы активировать Windows, перейдите в раздел "Параметры".</div>
</body></html>
